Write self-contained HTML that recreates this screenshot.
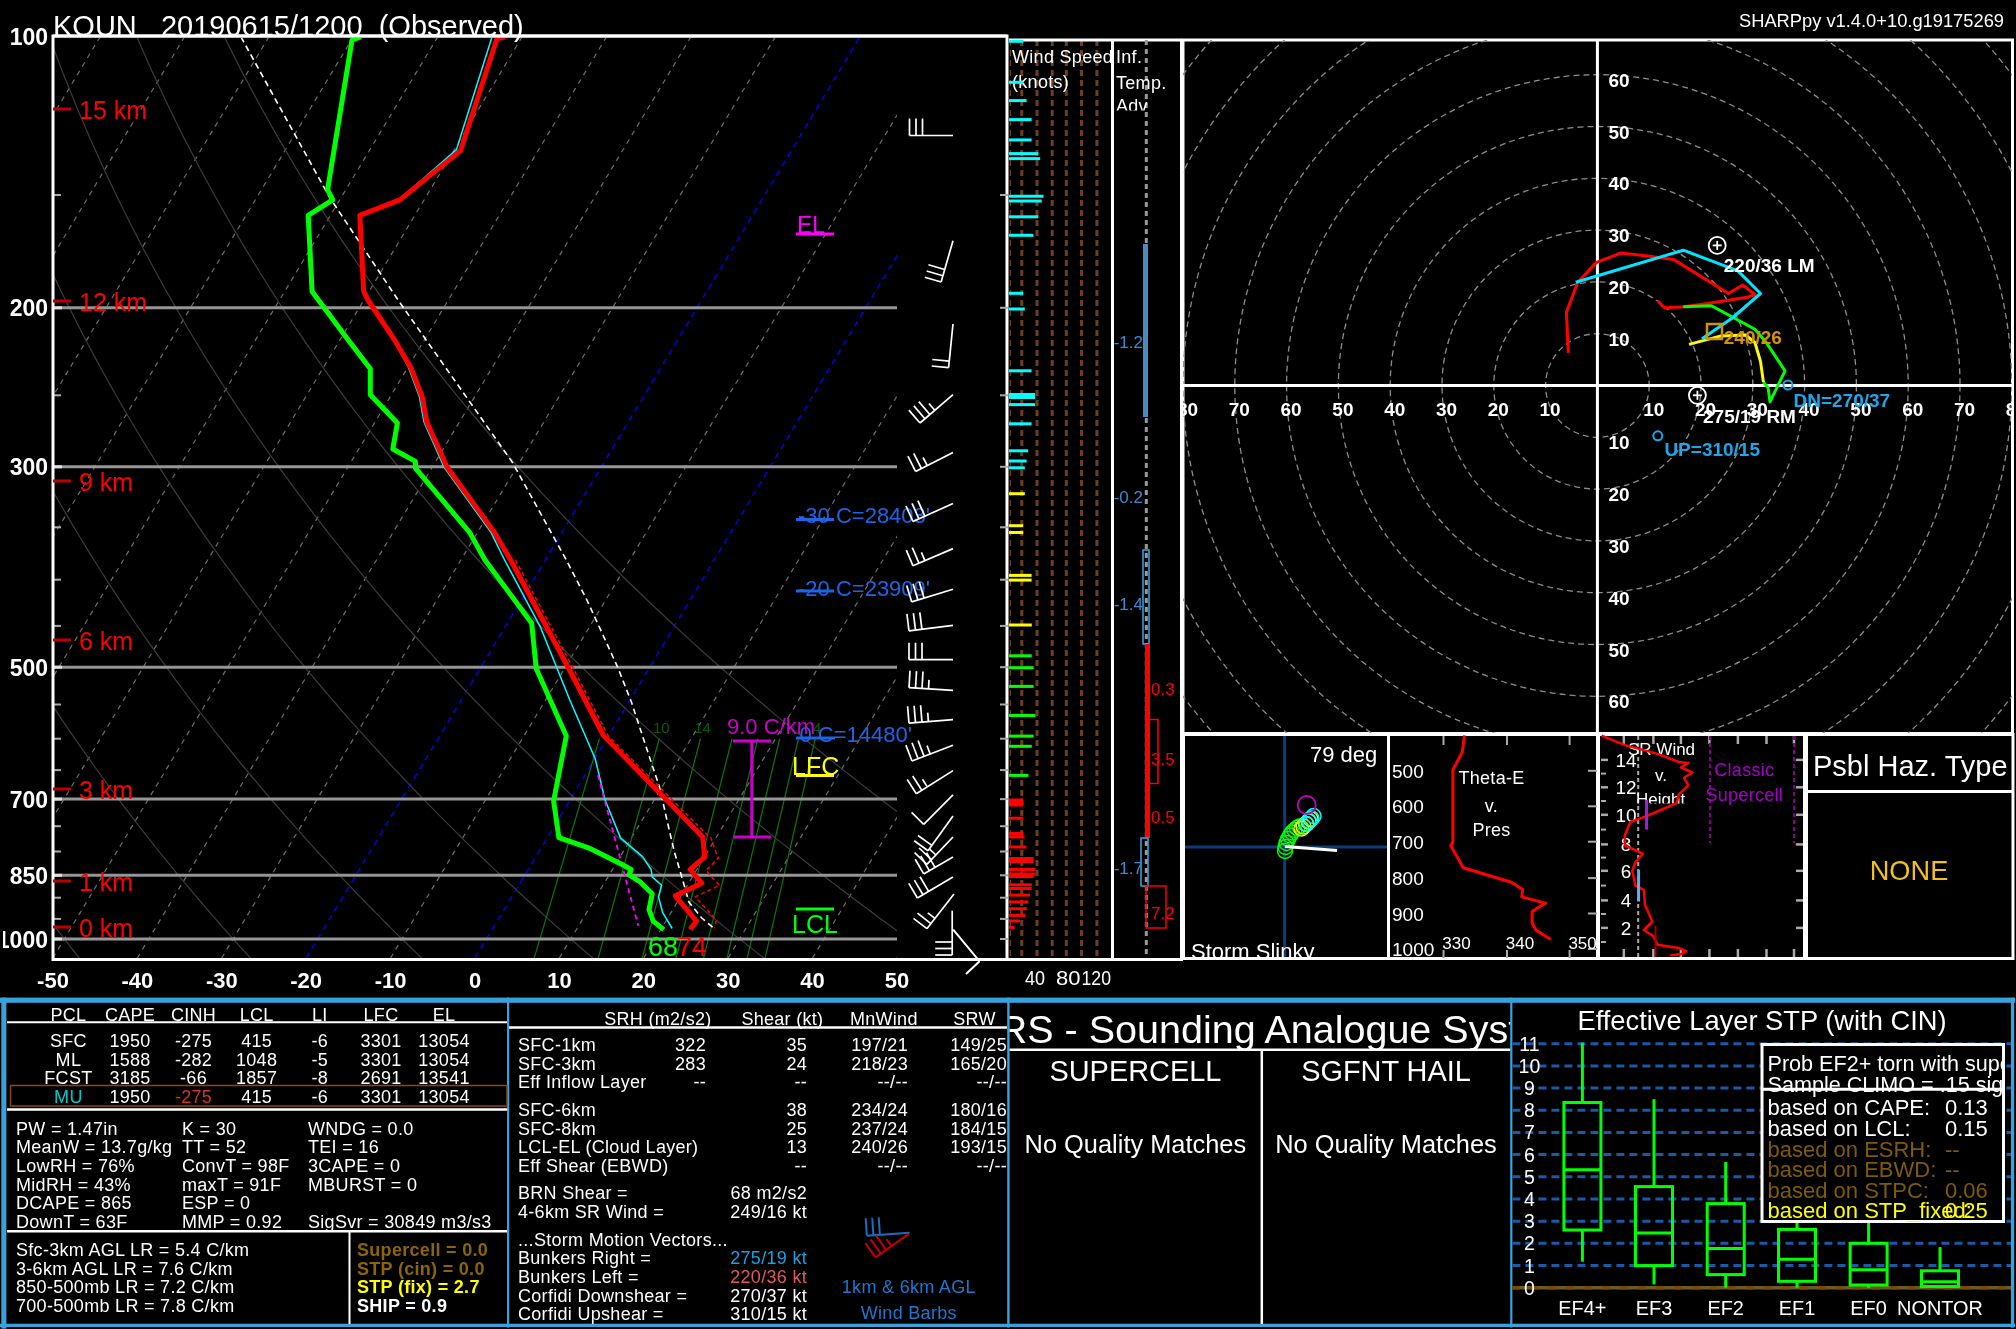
<!DOCTYPE html><html><head><meta charset="utf-8"><style>
html,body{margin:0;padding:0;background:#000;width:2016px;height:1329px;overflow:hidden}
svg{display:block;will-change:transform} text{font-family:"Liberation Sans", sans-serif}
</style></head><body><svg width="2016" height="1329" viewBox="0 0 2016 1329">
<rect width="2016" height="1329" fill="#000"/>
<defs><clipPath id="skc"><rect x="53" y="38" width="844" height="920"/></clipPath><clipPath id="lblc"><rect x="3" y="0" width="60" height="1000"/></clipPath><clipPath id="hodc"><rect x="1183" y="40" width="829" height="693"/></clipPath></defs>
<g clip-path="url(#skc)">
<line x1="-875.5" y1="958" x2="-321.4" y2="36" stroke="#6e6e6e" stroke-width="1.2" stroke-dasharray="5,5"/>
<line x1="-791.1" y1="958" x2="-237" y2="36" stroke="#6e6e6e" stroke-width="1.2" stroke-dasharray="5,5"/>
<line x1="-706.7" y1="958" x2="-152.6" y2="36" stroke="#6e6e6e" stroke-width="1.2" stroke-dasharray="5,5"/>
<line x1="-622.3" y1="958" x2="-68.2" y2="36" stroke="#6e6e6e" stroke-width="1.2" stroke-dasharray="5,5"/>
<line x1="-537.9" y1="958" x2="16.2" y2="36" stroke="#6e6e6e" stroke-width="1.2" stroke-dasharray="5,5"/>
<line x1="-453.5" y1="958" x2="100.6" y2="36" stroke="#6e6e6e" stroke-width="1.2" stroke-dasharray="5,5"/>
<line x1="-369.1" y1="958" x2="185" y2="36" stroke="#6e6e6e" stroke-width="1.2" stroke-dasharray="5,5"/>
<line x1="-284.7" y1="958" x2="269.4" y2="36" stroke="#6e6e6e" stroke-width="1.2" stroke-dasharray="5,5"/>
<line x1="-200.3" y1="958" x2="353.8" y2="36" stroke="#6e6e6e" stroke-width="1.2" stroke-dasharray="5,5"/>
<line x1="-115.9" y1="958" x2="438.2" y2="36" stroke="#6e6e6e" stroke-width="1.2" stroke-dasharray="5,5"/>
<line x1="-31.5" y1="958" x2="522.6" y2="36" stroke="#6e6e6e" stroke-width="1.2" stroke-dasharray="5,5"/>
<line x1="52.9" y1="958" x2="607" y2="36" stroke="#6e6e6e" stroke-width="1.2" stroke-dasharray="5,5"/>
<line x1="137.3" y1="958" x2="691.4" y2="36" stroke="#6e6e6e" stroke-width="1.2" stroke-dasharray="5,5"/>
<line x1="221.7" y1="958" x2="775.8" y2="36" stroke="#6e6e6e" stroke-width="1.2" stroke-dasharray="5,5"/>
<line x1="306.1" y1="958" x2="860.2" y2="36" stroke="#0000ff" stroke-width="1.3" stroke-dasharray="6,5"/>
<line x1="390.5" y1="958" x2="944.6" y2="36" stroke="#6e6e6e" stroke-width="1.2" stroke-dasharray="5,5"/>
<line x1="474.9" y1="958" x2="1029" y2="36" stroke="#0000ff" stroke-width="1.3" stroke-dasharray="6,5"/>
<line x1="559.3" y1="958" x2="1113.4" y2="36" stroke="#6e6e6e" stroke-width="1.2" stroke-dasharray="5,5"/>
<line x1="643.7" y1="958" x2="1197.8" y2="36" stroke="#6e6e6e" stroke-width="1.2" stroke-dasharray="5,5"/>
<line x1="728.1" y1="958" x2="1282.2" y2="36" stroke="#6e6e6e" stroke-width="1.2" stroke-dasharray="5,5"/>
<line x1="812.5" y1="958" x2="1366.6" y2="36" stroke="#6e6e6e" stroke-width="1.2" stroke-dasharray="5,5"/>
<line x1="896.9" y1="958" x2="1451" y2="36" stroke="#6e6e6e" stroke-width="1.2" stroke-dasharray="5,5"/>
<polyline points="79.4,958.1 76.4,954.4 73.4,950.6 70.4,946.8 67.4,942.9 64.4,939 61.4,935.1 58.3,931.1 55.3,927.1 52.2,923 49.1,918.9 46,914.7 42.9,910.5 39.7,906.3 36.6,902 33.4,897.7 30.2,893.3 27,888.9 23.8,884.4 20.5,879.9 17.3,875.3 14,870.6 10.7,865.9 7.4,861.2 4,856.4 0.7,851.5 -2.7,846.6 -6.1,841.6 -9.5,836.5 -12.9,831.4 -16.4,826.2 -19.9,820.9 -23.4,815.6 -26.9,810.2 -30.4,804.7 -34,799.1 -37.6,793.5 -41.2,787.8 -44.8,781.9 -48.5,776 -52.1,770.1 -55.9,764 -59.6,757.8 -63.3,751.5 -67.1,745.2 -70.9,738.7 -74.8,732.1 -78.6,725.4 -82.5,718.6 -86.4,711.6 -90.4,704.5 -94.4,697.4 -98.4,690 -102.4,682.6 -106.5,674.9 -110.6,667.2 -114.7,659.2 -118.9,651.2 -123.1,642.9 -127.3,634.5 -131.6,625.9 -135.9,617 -140.2,608 -144.6,598.8 -149,589.3 -153.4,579.7 -157.9,569.7 -162.4,559.5 -167,549.1 -171.6,538.3 -176.2,527.3 -180.9,515.9 -185.6,504.2 -190.3,492.2 -195.1,479.7 -200,466.8 -204.9,453.5 -209.8,439.8 -214.7,425.5 -219.7,410.7 -224.8,395.3 -229.9,379.3 -235,362.6 -240.1,345.2 -245.3,327 -250.5,307.8 -255.7,287.7 -260.9,266.5 -266.1,244.1 -271.3,220.3 -276.5,195 -281.6,168 -286.6,138.9 -291.5,107.5 -296.3,73.4 -300.7,36" fill="none" stroke="#3c3c3c" stroke-width="1.2" stroke-linejoin="round"/>
<polyline points="250.5,958.1 247.1,954.4 243.7,950.6 240.2,946.8 236.7,942.9 233.2,939 229.7,935.1 226.2,931.1 222.6,927.1 219,923 215.5,918.9 211.8,914.7 208.2,910.5 204.6,906.3 200.9,902 197.2,897.7 193.5,893.3 189.8,888.9 186,884.4 182.2,879.9 178.4,875.3 174.6,870.6 170.7,865.9 166.9,861.2 163,856.4 159.1,851.5 155.1,846.6 151.2,841.6 147.2,836.5 143.1,831.4 139.1,826.2 135,820.9 130.9,815.6 126.8,810.2 122.6,804.7 118.5,799.1 114.3,793.5 110,787.8 105.7,781.9 101.4,776 97.1,770.1 92.7,764 88.3,757.8 83.9,751.5 79.4,745.2 74.9,738.7 70.4,732.1 65.8,725.4 61.2,718.6 56.6,711.6 51.9,704.5 47.2,697.4 42.4,690 37.6,682.6 32.8,674.9 27.9,667.2 23,659.2 18,651.2 13,642.9 7.9,634.5 2.8,625.9 -2.3,617 -7.6,608 -12.8,598.8 -18.1,589.3 -23.5,579.7 -28.9,569.7 -34.4,559.5 -39.9,549.1 -45.5,538.3 -51.1,527.3 -56.8,515.9 -62.6,504.2 -68.4,492.2 -74.3,479.7 -80.3,466.8 -86.3,453.5 -92.4,439.8 -98.6,425.5 -104.9,410.7 -111.2,395.3 -117.6,379.3 -124,362.6 -130.6,345.2 -137.2,327 -143.9,307.8 -150.6,287.7 -157.5,266.5 -164.4,244.1 -171.3,220.3 -178.3,195 -185.4,168 -192.4,138.9 -199.4,107.5 -206.4,73.4 -213.3,36" fill="none" stroke="#3c3c3c" stroke-width="1.2" stroke-linejoin="round"/>
<polyline points="421.7,958.1 417.8,954.4 413.9,950.6 410,946.8 406,942.9 402,939 398,935.1 394,931.1 390,927.1 385.9,923 381.8,918.9 377.7,914.7 373.5,910.5 369.4,906.3 365.2,902 361,897.7 356.8,893.3 352.5,888.9 348.2,884.4 343.9,879.9 339.6,875.3 335.2,870.6 330.8,865.9 326.4,861.2 321.9,856.4 317.4,851.5 312.9,846.6 308.4,841.6 303.8,836.5 299.2,831.4 294.6,826.2 289.9,820.9 285.2,815.6 280.5,810.2 275.7,804.7 270.9,799.1 266.1,793.5 261.2,787.8 256.3,781.9 251.3,776 246.4,770.1 241.3,764 236.3,757.8 231.2,751.5 226,745.2 220.8,738.7 215.6,732.1 210.3,725.4 205,718.6 199.6,711.6 194.2,704.5 188.7,697.4 183.2,690 177.7,682.6 172,674.9 166.4,667.2 160.6,659.2 154.9,651.2 149,642.9 143.1,634.5 137.2,625.9 131.2,617 125.1,608 118.9,598.8 112.7,589.3 106.4,579.7 100.1,569.7 93.7,559.5 87.2,549.1 80.6,538.3 73.9,527.3 67.2,515.9 60.4,504.2 53.5,492.2 46.5,479.7 39.4,466.8 32.2,453.5 24.9,439.8 17.5,425.5 10,410.7 2.4,395.3 -5.3,379.3 -13.1,362.6 -21.1,345.2 -29.1,327 -37.3,307.8 -45.6,287.7 -54.1,266.5 -62.6,244.1 -71.3,220.3 -80.1,195 -89.1,168 -98.2,138.9 -107.3,107.5 -116.6,73.4 -125.9,36" fill="none" stroke="#3c3c3c" stroke-width="1.2" stroke-linejoin="round"/>
<polyline points="592.9,958.1 588.5,954.4 584.1,950.6 579.7,946.8 575.3,942.9 570.8,939 566.3,935.1 561.8,931.1 557.3,927.1 552.7,923 548.1,918.9 543.5,914.7 538.9,910.5 534.2,906.3 529.5,902 524.8,897.7 520,893.3 515.2,888.9 510.4,884.4 505.6,879.9 500.7,875.3 495.8,870.6 490.8,865.9 485.9,861.2 480.9,856.4 475.8,851.5 470.7,846.6 465.6,841.6 460.5,836.5 455.3,831.4 450.1,826.2 444.8,820.9 439.5,815.6 434.2,810.2 428.8,804.7 423.4,799.1 417.9,793.5 412.4,787.8 406.8,781.9 401.2,776 395.6,770.1 389.9,764 384.2,757.8 378.4,751.5 372.6,745.2 366.7,738.7 360.8,732.1 354.8,725.4 348.7,718.6 342.7,711.6 336.5,704.5 330.3,697.4 324,690 317.7,682.6 311.3,674.9 304.8,667.2 298.3,659.2 291.7,651.2 285.1,642.9 278.4,634.5 271.5,625.9 264.7,617 257.7,608 250.7,598.8 243.6,589.3 236.4,579.7 229.1,569.7 221.7,559.5 214.2,549.1 206.6,538.3 199,527.3 191.2,515.9 183.3,504.2 175.3,492.2 167.2,479.7 159,466.8 150.7,453.5 142.2,439.8 133.6,425.5 124.9,410.7 116,395.3 107,379.3 97.8,362.6 88.5,345.2 79,327 69.3,307.8 59.4,287.7 49.4,266.5 39.1,244.1 28.7,220.3 18,195 7.2,168 -3.9,138.9 -15.2,107.5 -26.7,73.4 -38.4,36" fill="none" stroke="#3c3c3c" stroke-width="1.2" stroke-linejoin="round"/>
<polyline points="764,958.1 759.2,954.4 754.4,950.6 749.5,946.8 744.6,942.9 739.6,939 734.7,935.1 729.7,931.1 724.6,927.1 719.6,923 714.5,918.9 709.4,914.7 704.2,910.5 699,906.3 693.8,902 688.6,897.7 683.3,893.3 678,888.9 672.6,884.4 667.3,879.9 661.8,875.3 656.4,870.6 650.9,865.9 645.4,861.2 639.8,856.4 634.2,851.5 628.5,846.6 622.9,841.6 617.1,836.5 611.4,831.4 605.5,826.2 599.7,820.9 593.8,815.6 587.8,810.2 581.8,804.7 575.8,799.1 569.7,793.5 563.6,787.8 557.4,781.9 551.2,776 544.9,770.1 538.5,764 532.1,757.8 525.7,751.5 519.1,745.2 512.6,738.7 505.9,732.1 499.3,725.4 492.5,718.6 485.7,711.6 478.8,704.5 471.8,697.4 464.8,690 457.7,682.6 450.6,674.9 443.3,667.2 436,659.2 428.6,651.2 421.1,642.9 413.6,634.5 405.9,625.9 398.2,617 390.3,608 382.4,598.8 374.4,589.3 366.3,579.7 358.1,569.7 349.7,559.5 341.3,549.1 332.7,538.3 324,527.3 315.2,515.9 306.3,504.2 297.2,492.2 288,479.7 278.7,466.8 269.2,453.5 259.6,439.8 249.7,425.5 239.8,410.7 229.6,395.3 219.3,379.3 208.7,362.6 198,345.2 187,327 175.9,307.8 164.4,287.7 152.8,266.5 140.9,244.1 128.7,220.3 116.2,195 103.4,168 90.3,138.9 76.9,107.5 63.1,73.4 49,36" fill="none" stroke="#3c3c3c" stroke-width="1.2" stroke-linejoin="round"/>
<polyline points="935.2,958.1 929.9,954.4 924.6,950.6 919.2,946.8 913.8,942.9 908.4,939 903,935.1 897.5,931.1 892,927.1 886.4,923 880.8,918.9 875.2,914.7 869.6,910.5 863.9,906.3 858.1,902 852.4,897.7 846.6,893.3 840.7,888.9 834.9,884.4 828.9,879.9 823,875.3 817,870.6 810.9,865.9 804.9,861.2 798.7,856.4 792.6,851.5 786.3,846.6 780.1,841.6 773.8,836.5 767.4,831.4 761,826.2 754.6,820.9 748.1,815.6 741.5,810.2 734.9,804.7 728.3,799.1 721.5,793.5 714.8,787.8 707.9,781.9 701.1,776 694.1,770.1 687.1,764 680,757.8 672.9,751.5 665.7,745.2 658.5,738.7 651.1,732.1 643.7,725.4 636.3,718.6 628.7,711.6 621.1,704.5 613.4,697.4 605.6,690 597.8,682.6 589.8,674.9 581.8,667.2 573.7,659.2 565.5,651.2 557.2,642.9 548.8,634.5 540.3,625.9 531.7,617 523,608 514.2,598.8 505.2,589.3 496.2,579.7 487,569.7 477.8,559.5 468.3,549.1 458.8,538.3 449.1,527.3 439.3,515.9 429.3,504.2 419.1,492.2 408.8,479.7 398.4,466.8 387.7,453.5 376.9,439.8 365.9,425.5 354.6,410.7 343.2,395.3 331.5,379.3 319.6,362.6 307.5,345.2 295.1,327 282.4,307.8 269.5,287.7 256.2,266.5 242.6,244.1 228.7,220.3 214.4,195 199.7,168 184.5,138.9 169,107.5 153,73.4 136.4,36" fill="none" stroke="#3c3c3c" stroke-width="1.2" stroke-linejoin="round"/>
<polyline points="1106.4,958.1 1100.6,954.4 1094.8,950.6 1089,946.8 1083.1,942.9 1077.2,939 1071.3,935.1 1065.3,931.1 1059.3,927.1 1053.3,923 1047.2,918.9 1041.1,914.7 1034.9,910.5 1028.7,906.3 1022.5,902 1016.2,897.7 1009.8,893.3 1003.5,888.9 997.1,884.4 990.6,879.9 984.1,875.3 977.6,870.6 971,865.9 964.4,861.2 957.7,856.4 950.9,851.5 944.2,846.6 937.3,841.6 930.4,836.5 923.5,831.4 916.5,826.2 909.5,820.9 902.4,815.6 895.2,810.2 888,804.7 880.7,799.1 873.4,793.5 866,787.8 858.5,781.9 851,776 843.4,770.1 835.7,764 828,757.8 820.2,751.5 812.3,745.2 804.3,738.7 796.3,732.1 788.2,725.4 780,718.6 771.7,711.6 763.4,704.5 754.9,697.4 746.4,690 737.8,682.6 729.1,674.9 720.3,667.2 711.4,659.2 702.3,651.2 693.2,642.9 684,634.5 674.7,625.9 665.2,617 655.6,608 645.9,598.8 636.1,589.3 626.1,579.7 616,569.7 605.8,559.5 595.4,549.1 584.9,538.3 574.2,527.3 563.3,515.9 552.3,504.2 541,492.2 529.6,479.7 518,466.8 506.2,453.5 494.2,439.8 482,425.5 469.5,410.7 456.8,395.3 443.8,379.3 430.6,362.6 417,345.2 403.2,327 389,307.8 374.5,287.7 359.6,266.5 344.4,244.1 328.7,220.3 312.5,195 295.9,168 278.8,138.9 261.1,107.5 242.8,73.4 223.9,36" fill="none" stroke="#3c3c3c" stroke-width="1.2" stroke-linejoin="round"/>
<line x1="534.2" y1="958.1" x2="599.4" y2="738.7" stroke="#0a7a0a" stroke-width="1.2"/>
<line x1="598.2" y1="958.1" x2="659.3" y2="738.7" stroke="#0a7a0a" stroke-width="1.2"/>
<line x1="642.2" y1="958.1" x2="700.5" y2="738.7" stroke="#0a7a0a" stroke-width="1.2"/>
<line x1="676.1" y1="958.1" x2="732.1" y2="738.7" stroke="#0a7a0a" stroke-width="1.2"/>
<line x1="703.6" y1="958.1" x2="757.9" y2="738.7" stroke="#0a7a0a" stroke-width="1.2"/>
<line x1="727" y1="958.1" x2="779.7" y2="738.7" stroke="#0a7a0a" stroke-width="1.2"/>
<line x1="747.2" y1="958.1" x2="798.5" y2="738.7" stroke="#0a7a0a" stroke-width="1.2"/>
<line x1="765.1" y1="958.1" x2="815.2" y2="738.7" stroke="#0a7a0a" stroke-width="1.2"/>
</g>
<line x1="53" y1="307.8" x2="897" y2="307.8" stroke="#969696" stroke-width="3"/>
<line x1="53" y1="307.8" x2="62" y2="307.8" stroke="#e0e0e0" stroke-width="3"/>
<line x1="53" y1="466.8" x2="897" y2="466.8" stroke="#969696" stroke-width="3"/>
<line x1="53" y1="466.8" x2="62" y2="466.8" stroke="#e0e0e0" stroke-width="3"/>
<line x1="53" y1="667.2" x2="897" y2="667.2" stroke="#969696" stroke-width="3"/>
<line x1="53" y1="667.2" x2="62" y2="667.2" stroke="#e0e0e0" stroke-width="3"/>
<line x1="53" y1="799.1" x2="897" y2="799.1" stroke="#969696" stroke-width="3"/>
<line x1="53" y1="799.1" x2="62" y2="799.1" stroke="#e0e0e0" stroke-width="3"/>
<line x1="53" y1="875.3" x2="897" y2="875.3" stroke="#969696" stroke-width="3"/>
<line x1="53" y1="875.3" x2="62" y2="875.3" stroke="#e0e0e0" stroke-width="3"/>
<line x1="53" y1="939" x2="897" y2="939" stroke="#969696" stroke-width="3"/>
<line x1="53" y1="939" x2="62" y2="939" stroke="#e0e0e0" stroke-width="3"/>
<line x1="53" y1="195" x2="61" y2="195" stroke="#aaaaaa" stroke-width="2"/>
<line x1="53" y1="395.3" x2="61" y2="395.3" stroke="#aaaaaa" stroke-width="2"/>
<line x1="53" y1="527.3" x2="61" y2="527.3" stroke="#aaaaaa" stroke-width="2"/>
<line x1="53" y1="579.7" x2="61" y2="579.7" stroke="#aaaaaa" stroke-width="2"/>
<line x1="53" y1="625.9" x2="61" y2="625.9" stroke="#aaaaaa" stroke-width="2"/>
<line x1="53" y1="704.5" x2="61" y2="704.5" stroke="#aaaaaa" stroke-width="2"/>
<line x1="53" y1="738.7" x2="61" y2="738.7" stroke="#aaaaaa" stroke-width="2"/>
<line x1="53" y1="770.1" x2="61" y2="770.1" stroke="#aaaaaa" stroke-width="2"/>
<line x1="53" y1="826.2" x2="61" y2="826.2" stroke="#aaaaaa" stroke-width="2"/>
<line x1="53" y1="851.5" x2="61" y2="851.5" stroke="#aaaaaa" stroke-width="2"/>
<line x1="53" y1="897.7" x2="61" y2="897.7" stroke="#aaaaaa" stroke-width="2"/>
<line x1="53" y1="918.9" x2="61" y2="918.9" stroke="#aaaaaa" stroke-width="2"/>
<rect x="53" y="36" width="954" height="923.5" fill="none" stroke="#fff" stroke-width="3"/>
<g clip-path="url(#lblc)">
<text x="48" y="44.5" font-size="23" fill="#fff" text-anchor="end" font-weight="bold">100</text>
<text x="48" y="316.3" font-size="23" fill="#fff" text-anchor="end" font-weight="bold">200</text>
<text x="48" y="475.3" font-size="23" fill="#fff" text-anchor="end" font-weight="bold">300</text>
<text x="48" y="675.7" font-size="23" fill="#fff" text-anchor="end" font-weight="bold">500</text>
<text x="48" y="807.6" font-size="23" fill="#fff" text-anchor="end" font-weight="bold">700</text>
<text x="48" y="883.8" font-size="23" fill="#fff" text-anchor="end" font-weight="bold">850</text>
<text x="48" y="947.5" font-size="23" fill="#fff" text-anchor="end" font-weight="bold">1000</text>
</g>
<text x="53" y="988" font-size="22" fill="#fff" text-anchor="middle" font-weight="bold">-50</text>
<text x="137.4" y="988" font-size="22" fill="#fff" text-anchor="middle" font-weight="bold">-40</text>
<text x="221.8" y="988" font-size="22" fill="#fff" text-anchor="middle" font-weight="bold">-30</text>
<text x="306.2" y="988" font-size="22" fill="#fff" text-anchor="middle" font-weight="bold">-20</text>
<text x="390.6" y="988" font-size="22" fill="#fff" text-anchor="middle" font-weight="bold">-10</text>
<text x="475" y="988" font-size="22" fill="#fff" text-anchor="middle" font-weight="bold">0</text>
<text x="559.4" y="988" font-size="22" fill="#fff" text-anchor="middle" font-weight="bold">10</text>
<text x="643.8" y="988" font-size="22" fill="#fff" text-anchor="middle" font-weight="bold">20</text>
<text x="728.2" y="988" font-size="22" fill="#fff" text-anchor="middle" font-weight="bold">30</text>
<text x="812.6" y="988" font-size="22" fill="#fff" text-anchor="middle" font-weight="bold">40</text>
<text x="897" y="988" font-size="22" fill="#fff" text-anchor="middle" font-weight="bold">50</text>
<line x1="53" y1="927" x2="71" y2="927" stroke="#bb0000" stroke-width="3"/>
<text x="79" y="937" font-size="25" fill="#ff0000">0 km</text>
<line x1="53" y1="881" x2="71" y2="881" stroke="#bb0000" stroke-width="3"/>
<text x="79" y="891" font-size="25" fill="#ff0000">1 km</text>
<line x1="53" y1="789" x2="71" y2="789" stroke="#bb0000" stroke-width="3"/>
<text x="79" y="799" font-size="25" fill="#ff0000">3 km</text>
<line x1="53" y1="640" x2="71" y2="640" stroke="#bb0000" stroke-width="3"/>
<text x="79" y="650" font-size="25" fill="#ff0000">6 km</text>
<line x1="53" y1="481" x2="71" y2="481" stroke="#bb0000" stroke-width="3"/>
<text x="79" y="491" font-size="25" fill="#ff0000">9 km</text>
<line x1="53" y1="301" x2="71" y2="301" stroke="#bb0000" stroke-width="3"/>
<text x="79" y="311" font-size="25" fill="#ff0000">12 km</text>
<line x1="53" y1="109" x2="71" y2="109" stroke="#bb0000" stroke-width="3"/>
<text x="79" y="119" font-size="25" fill="#ff0000">15 km</text>
<text x="53" y="35.5" font-size="29" fill="#fff" xml:space="preserve" style="white-space:pre">KOUN   20190615/1200  (Observed)</text>
<text x="2004" y="27" font-size="19" fill="#fff" text-anchor="end" textLength="265" lengthAdjust="spacingAndGlyphs">SHARPpy v1.4.0+10.g19175269</text>
<line x1="53" y1="36" x2="1007" y2="36" stroke="#fff" stroke-width="3"/>
<text x="601.4" y="733" font-size="15" fill="#0a5c0a" text-anchor="middle">6</text>
<text x="661.3" y="733" font-size="15" fill="#0a5c0a" text-anchor="middle">10</text>
<text x="702.5" y="733" font-size="15" fill="#0a5c0a" text-anchor="middle">14</text>
<text x="817.2" y="733" font-size="15" fill="#0a5c0a" text-anchor="middle">4</text>
<g clip-path="url(#skc)">
<polyline points="492,37 456.5,149.6 399,199.9 359.5,215.4 363.4,291.5 393.5,340 408.6,367.7 419.5,397 424,421.9 444,467 491,532.4 504.6,560 540.7,627.7 569.8,700 595.2,758.7 605,799.8 613.2,820 620.5,837.9 642.7,856.9 651.1,869.5 652.2,876.9 661.6,885.3 658.5,896.9 662.7,912.7 672.2,928.5" fill="none" stroke="#00ffff" stroke-width="1.5" stroke-linejoin="round"/>
<polyline points="241,37 330,198 399.6,302.3 512.5,462.5 566.3,560 586.9,600 617.5,666.8 631.4,702 649,755.6 659.8,788 666.9,820 674.3,851.6 682.7,880 689,902.2 701.7,918 714.3,928.5" fill="none" stroke="#ffffff" stroke-width="1.6" stroke-linejoin="round" stroke-dasharray="6,4"/>
<polyline points="515.5,560 572.5,666.8 608,735.5 707.5,835 710.1,835.8 716.4,853.7 718.5,857.9 705.9,870.6 719.6,885.3 695.3,896.9 716.4,920.1 714.3,928.5" fill="none" stroke="#ff0000" stroke-width="1.5" stroke-linejoin="round" stroke-dasharray="4,3"/>
<polyline points="598,775.3 638.3,926" fill="none" stroke="#ff00ff" stroke-width="1.8" stroke-linejoin="round" stroke-dasharray="5,4"/>
<polyline points="361,37 352,40 327.6,189.6 332.7,199.9 308.2,215.4 312.1,291.5 318.4,300 348.2,340 370.3,368.8 370.3,394.8 397.4,423 392.8,449 415.4,461.4 415.4,468.1 469.6,532.4 485,560 531.7,623.2 536.2,668.4 566.3,736 553.6,800.9 558.9,837.7 590,848.4 621.6,864.2 631.1,869.5 629,874.8 640.6,882.2 652.2,893.7 649,909.5 653.2,921.1 663.7,929.6" fill="none" stroke="#00ff00" stroke-width="5" stroke-linejoin="round"/>
<polyline points="505,37 497,38.5 460.4,150.9 399.8,199.9 359.8,215.4 363.7,291.5 368,300 394.6,340 410.9,367.7 422.2,397 426.7,421.9 447,467 494.4,532.4 510.6,560 567.8,666.8 603.5,735.5 702.7,836.9 704.8,856.9 690.1,869.5 701.7,883.2 675.3,895.8 696.4,921.1 690.1,929.6" fill="none" stroke="#ff0000" stroke-width="5" stroke-linejoin="round"/>
</g>
<text x="797" y="233" font-size="23" fill="#ff00ff">EL</text>
<line x1="796" y1="234" x2="834" y2="234" stroke="#ff00ff" stroke-width="3"/>
<text x="798" y="522.5" font-size="22" fill="#1e64e6">-30 C=28403'</text>
<line x1="796" y1="519.5" x2="834" y2="519.5" stroke="#1e64e6" stroke-width="3"/>
<text x="798" y="595.5" font-size="22" fill="#1e64e6">-20 C=23909'</text>
<line x1="796" y1="591" x2="834" y2="591" stroke="#1e64e6" stroke-width="3"/>
<text x="799.5" y="742" font-size="22" fill="#1e64e6">0 C=14480'</text>
<line x1="796" y1="738" x2="835" y2="738" stroke="#1e64e6" stroke-width="3"/>
<text x="727" y="734" font-size="22" fill="#cc00cc">9.0 C/km</text>
<line x1="751.8" y1="741" x2="751.8" y2="837" stroke="#cc00cc" stroke-width="3"/>
<line x1="733" y1="741" x2="771" y2="741" stroke="#cc00cc" stroke-width="3"/>
<line x1="733" y1="837" x2="771" y2="837" stroke="#cc00cc" stroke-width="3"/>
<text x="792" y="775" font-size="25" fill="#ffff00">LFC</text>
<line x1="796" y1="775.5" x2="834" y2="775.5" stroke="#ffff00" stroke-width="3"/>
<text x="792" y="933" font-size="25" fill="#00ff00">LCL</text>
<line x1="796" y1="909" x2="834" y2="909" stroke="#00ff00" stroke-width="3"/>
<text x="648" y="956" font-size="27" fill="#00ff00">68</text>
<text x="677" y="956" font-size="27" fill="#ff0000">74</text>
<line x1="953" y1="135.5" x2="909.5" y2="135.5" stroke="#fff" stroke-width="1.7"/>
<line x1="909.5" y1="135.5" x2="909.5" y2="118.5" stroke="#fff" stroke-width="1.7"/>
<line x1="916" y1="135.5" x2="916" y2="118.5" stroke="#fff" stroke-width="1.7"/>
<line x1="922.5" y1="135.5" x2="922.5" y2="118.5" stroke="#fff" stroke-width="1.7"/>
<line x1="953" y1="240.7" x2="941.1" y2="282" stroke="#fff" stroke-width="1.7"/>
<line x1="941.1" y1="282" x2="924.8" y2="277.3" stroke="#fff" stroke-width="1.7"/>
<line x1="942.9" y1="275.8" x2="926.6" y2="271" stroke="#fff" stroke-width="1.7"/>
<line x1="944.7" y1="269.5" x2="928.4" y2="264.8" stroke="#fff" stroke-width="1.7"/>
<line x1="953" y1="324" x2="948.6" y2="367.7" stroke="#fff" stroke-width="1.7"/>
<line x1="948.6" y1="367.7" x2="931.7" y2="366" stroke="#fff" stroke-width="1.7"/>
<line x1="949.3" y1="361.2" x2="932.3" y2="359.5" stroke="#fff" stroke-width="1.7"/>
<line x1="953" y1="394.7" x2="920" y2="423" stroke="#fff" stroke-width="1.7"/>
<line x1="920" y1="423" x2="908.9" y2="410.1" stroke="#fff" stroke-width="1.7"/>
<line x1="924.9" y1="418.8" x2="913.9" y2="405.9" stroke="#fff" stroke-width="1.7"/>
<line x1="929.9" y1="414.5" x2="918.8" y2="401.6" stroke="#fff" stroke-width="1.7"/>
<line x1="934.8" y1="410.3" x2="928.9" y2="403.5" stroke="#fff" stroke-width="1.7"/>
<line x1="953" y1="452.5" x2="915.6" y2="471.4" stroke="#fff" stroke-width="1.7"/>
<line x1="915.6" y1="471.4" x2="907.9" y2="456.2" stroke="#fff" stroke-width="1.7"/>
<line x1="921.4" y1="468.5" x2="913.7" y2="453.3" stroke="#fff" stroke-width="1.7"/>
<line x1="927.2" y1="465.5" x2="923.1" y2="457.5" stroke="#fff" stroke-width="1.7"/>
<line x1="953" y1="503.5" x2="913" y2="521.5" stroke="#fff" stroke-width="1.7"/>
<line x1="913" y1="521.5" x2="906" y2="506" stroke="#fff" stroke-width="1.7"/>
<line x1="918.9" y1="518.8" x2="912" y2="503.3" stroke="#fff" stroke-width="1.7"/>
<line x1="924.9" y1="516.2" x2="917.9" y2="500.7" stroke="#fff" stroke-width="1.7"/>
<line x1="953" y1="548.6" x2="913" y2="565.8" stroke="#fff" stroke-width="1.7"/>
<line x1="913" y1="565.8" x2="906.3" y2="550.2" stroke="#fff" stroke-width="1.7"/>
<line x1="919" y1="563.2" x2="912.3" y2="547.6" stroke="#fff" stroke-width="1.7"/>
<line x1="924.9" y1="560.7" x2="921.4" y2="552.4" stroke="#fff" stroke-width="1.7"/>
<line x1="953" y1="589.3" x2="911.7" y2="601.9" stroke="#fff" stroke-width="1.7"/>
<line x1="911.7" y1="601.9" x2="906.7" y2="585.6" stroke="#fff" stroke-width="1.7"/>
<line x1="917.9" y1="600" x2="913" y2="583.7" stroke="#fff" stroke-width="1.7"/>
<line x1="924.1" y1="598.1" x2="919.2" y2="581.8" stroke="#fff" stroke-width="1.7"/>
<line x1="953" y1="625.4" x2="909" y2="630.8" stroke="#fff" stroke-width="1.7"/>
<line x1="909" y1="630.8" x2="906.9" y2="613.9" stroke="#fff" stroke-width="1.7"/>
<line x1="915.5" y1="630" x2="913.4" y2="613.1" stroke="#fff" stroke-width="1.7"/>
<line x1="921.9" y1="629.2" x2="919.8" y2="612.3" stroke="#fff" stroke-width="1.7"/>
<line x1="953" y1="659.7" x2="909" y2="659.7" stroke="#fff" stroke-width="1.7"/>
<line x1="909" y1="659.7" x2="909" y2="642.7" stroke="#fff" stroke-width="1.7"/>
<line x1="915.5" y1="659.7" x2="915.5" y2="642.7" stroke="#fff" stroke-width="1.7"/>
<line x1="922" y1="659.7" x2="922" y2="642.7" stroke="#fff" stroke-width="1.7"/>
<line x1="953" y1="690.4" x2="909" y2="687.7" stroke="#fff" stroke-width="1.7"/>
<line x1="909" y1="687.7" x2="910" y2="670.7" stroke="#fff" stroke-width="1.7"/>
<line x1="915.5" y1="688.1" x2="916.5" y2="671.1" stroke="#fff" stroke-width="1.7"/>
<line x1="922" y1="688.5" x2="923" y2="671.5" stroke="#fff" stroke-width="1.7"/>
<line x1="928.5" y1="688.9" x2="929" y2="679.9" stroke="#fff" stroke-width="1.7"/>
<line x1="953" y1="719.6" x2="909" y2="723.2" stroke="#fff" stroke-width="1.7"/>
<line x1="909" y1="723.2" x2="907.6" y2="706.3" stroke="#fff" stroke-width="1.7"/>
<line x1="915.5" y1="722.7" x2="914.1" y2="705.7" stroke="#fff" stroke-width="1.7"/>
<line x1="922" y1="722.1" x2="920.6" y2="705.2" stroke="#fff" stroke-width="1.7"/>
<line x1="928.4" y1="721.6" x2="927.7" y2="712.6" stroke="#fff" stroke-width="1.7"/>
<line x1="953" y1="745.3" x2="912" y2="761" stroke="#fff" stroke-width="1.7"/>
<line x1="912" y1="761" x2="905.9" y2="745.1" stroke="#fff" stroke-width="1.7"/>
<line x1="918.1" y1="758.7" x2="912" y2="742.8" stroke="#fff" stroke-width="1.7"/>
<line x1="924.1" y1="756.4" x2="918.1" y2="740.5" stroke="#fff" stroke-width="1.7"/>
<line x1="930.2" y1="754" x2="927" y2="745.6" stroke="#fff" stroke-width="1.7"/>
<line x1="953" y1="770.6" x2="916.3" y2="793.8" stroke="#fff" stroke-width="1.7"/>
<line x1="916.3" y1="793.8" x2="907.2" y2="779.4" stroke="#fff" stroke-width="1.7"/>
<line x1="921.8" y1="790.3" x2="912.7" y2="776" stroke="#fff" stroke-width="1.7"/>
<line x1="927.3" y1="786.9" x2="922.5" y2="779.2" stroke="#fff" stroke-width="1.7"/>
<line x1="953" y1="794.8" x2="923.7" y2="824.3" stroke="#fff" stroke-width="1.7"/>
<line x1="923.7" y1="824.3" x2="911.6" y2="812.3" stroke="#fff" stroke-width="1.7"/>
<line x1="953" y1="815.9" x2="928" y2="850.7" stroke="#fff" stroke-width="1.7"/>
<line x1="928" y1="850.7" x2="914.2" y2="840.8" stroke="#fff" stroke-width="1.7"/>
<line x1="931.8" y1="845.4" x2="918" y2="835.5" stroke="#fff" stroke-width="1.7"/>
<line x1="953" y1="837" x2="926.9" y2="864.4" stroke="#fff" stroke-width="1.7"/>
<line x1="926.9" y1="864.4" x2="914.6" y2="852.7" stroke="#fff" stroke-width="1.7"/>
<line x1="931.4" y1="859.7" x2="919.1" y2="848" stroke="#fff" stroke-width="1.7"/>
<line x1="935.9" y1="855" x2="929.3" y2="848.8" stroke="#fff" stroke-width="1.7"/>
<line x1="953" y1="857" x2="923.7" y2="873.9" stroke="#fff" stroke-width="1.7"/>
<line x1="923.7" y1="873.9" x2="915.2" y2="859.2" stroke="#fff" stroke-width="1.7"/>
<line x1="929.3" y1="870.7" x2="920.8" y2="855.9" stroke="#fff" stroke-width="1.7"/>
<line x1="935" y1="867.4" x2="926.5" y2="852.7" stroke="#fff" stroke-width="1.7"/>
<line x1="953" y1="877" x2="917.4" y2="898" stroke="#fff" stroke-width="1.7"/>
<line x1="917.4" y1="898" x2="908.8" y2="883.4" stroke="#fff" stroke-width="1.7"/>
<line x1="923" y1="894.7" x2="914.4" y2="880.1" stroke="#fff" stroke-width="1.7"/>
<line x1="928.6" y1="891.4" x2="920" y2="876.8" stroke="#fff" stroke-width="1.7"/>
<line x1="954" y1="893.9" x2="926.9" y2="928.7" stroke="#fff" stroke-width="1.7"/>
<line x1="926.9" y1="928.7" x2="913.5" y2="918.3" stroke="#fff" stroke-width="1.7"/>
<line x1="930.9" y1="923.6" x2="917.5" y2="913.1" stroke="#fff" stroke-width="1.7"/>
<line x1="934.9" y1="918.4" x2="927.8" y2="912.9" stroke="#fff" stroke-width="1.7"/>
<line x1="952.2" y1="910.7" x2="952.2" y2="955" stroke="#fff" stroke-width="1.7"/>
<line x1="952.2" y1="955" x2="935.2" y2="955" stroke="#fff" stroke-width="1.7"/>
<line x1="952.2" y1="948.5" x2="935.2" y2="948.5" stroke="#fff" stroke-width="1.7"/>
<line x1="952.2" y1="942" x2="935.2" y2="942" stroke="#fff" stroke-width="1.7"/>
<line x1="953.2" y1="929.7" x2="979.6" y2="961.3" stroke="#fff" stroke-width="2"/>
<line x1="979.6" y1="961.3" x2="966" y2="974" stroke="#fff" stroke-width="2"/>
<line x1="979.6" y1="961.3" x2="979.6" y2="946" stroke="#fff" stroke-width="0"/>
<line x1="1010.3" y1="40" x2="1010.3" y2="958" stroke="#8a5030" stroke-width="1" stroke-dasharray="6,4"/>
<line x1="1021.8" y1="40" x2="1021.8" y2="958" stroke="#6e3e20" stroke-width="3" stroke-dasharray="6,4"/>
<line x1="1037" y1="40" x2="1037" y2="958" stroke="#6e3e20" stroke-width="3" stroke-dasharray="6,4"/>
<line x1="1052.2" y1="40" x2="1052.2" y2="958" stroke="#6e3e20" stroke-width="3" stroke-dasharray="6,4"/>
<line x1="1066.3" y1="40" x2="1066.3" y2="958" stroke="#6e3e20" stroke-width="3" stroke-dasharray="6,4"/>
<line x1="1081.5" y1="40" x2="1081.5" y2="958" stroke="#6e3e20" stroke-width="3" stroke-dasharray="6,4"/>
<line x1="1096.9" y1="40" x2="1096.9" y2="958" stroke="#6e3e20" stroke-width="3" stroke-dasharray="6,4"/>
<line x1="1009" y1="40" x2="1112" y2="40" stroke="#fff" stroke-width="3"/>
<line x1="1112.5" y1="40" x2="1112.5" y2="958" stroke="#fff" stroke-width="3"/>
<line x1="1006" y1="959.5" x2="1183" y2="959.5" stroke="#fff" stroke-width="3"/>
<line x1="1000" y1="195" x2="1008" y2="195" stroke="#aaaaaa" stroke-width="2"/>
<line x1="1000" y1="307.8" x2="1008" y2="307.8" stroke="#aaaaaa" stroke-width="2"/>
<line x1="1000" y1="395.3" x2="1008" y2="395.3" stroke="#aaaaaa" stroke-width="2"/>
<line x1="1000" y1="466.8" x2="1008" y2="466.8" stroke="#aaaaaa" stroke-width="2"/>
<line x1="1000" y1="527.3" x2="1008" y2="527.3" stroke="#aaaaaa" stroke-width="2"/>
<line x1="1000" y1="579.7" x2="1008" y2="579.7" stroke="#aaaaaa" stroke-width="2"/>
<line x1="1000" y1="625.9" x2="1008" y2="625.9" stroke="#aaaaaa" stroke-width="2"/>
<line x1="1000" y1="667.2" x2="1008" y2="667.2" stroke="#aaaaaa" stroke-width="2"/>
<line x1="1000" y1="704.5" x2="1008" y2="704.5" stroke="#aaaaaa" stroke-width="2"/>
<line x1="1000" y1="738.7" x2="1008" y2="738.7" stroke="#aaaaaa" stroke-width="2"/>
<line x1="1000" y1="770.1" x2="1008" y2="770.1" stroke="#aaaaaa" stroke-width="2"/>
<line x1="1000" y1="799.1" x2="1008" y2="799.1" stroke="#aaaaaa" stroke-width="2"/>
<line x1="1000" y1="826.2" x2="1008" y2="826.2" stroke="#aaaaaa" stroke-width="2"/>
<line x1="1000" y1="851.5" x2="1008" y2="851.5" stroke="#aaaaaa" stroke-width="2"/>
<line x1="1000" y1="875.3" x2="1008" y2="875.3" stroke="#aaaaaa" stroke-width="2"/>
<line x1="1000" y1="897.7" x2="1008" y2="897.7" stroke="#aaaaaa" stroke-width="2"/>
<line x1="1000" y1="918.9" x2="1008" y2="918.9" stroke="#aaaaaa" stroke-width="2"/>
<line x1="1000" y1="939" x2="1008" y2="939" stroke="#aaaaaa" stroke-width="2"/>
<text x="1012" y="63" font-size="18" fill="#fff" letter-spacing="0.3">Wind Speed</text>
<text x="1012" y="88" font-size="18" fill="#fff" letter-spacing="0.3">(knots)</text>
<text x="1025" y="985" font-size="20" fill="#fff" textLength="20" lengthAdjust="spacingAndGlyphs">40</text>
<text x="1056" y="985" font-size="20" fill="#fff" textLength="24.5" lengthAdjust="spacingAndGlyphs">80</text>
<text x="1081.5" y="985" font-size="20" fill="#fff" textLength="29.5" lengthAdjust="spacingAndGlyphs">120</text>
<line x1="1009" y1="41.3" x2="1023.2" y2="41.3" stroke="#00ffff" stroke-width="3"/>
<line x1="1009" y1="82.3" x2="1023.2" y2="82.3" stroke="#00ffff" stroke-width="3"/>
<line x1="1009" y1="100.6" x2="1026.6" y2="100.6" stroke="#00ffff" stroke-width="3"/>
<line x1="1009" y1="119.6" x2="1031.6" y2="119.6" stroke="#00ffff" stroke-width="3"/>
<line x1="1009" y1="139.9" x2="1031.6" y2="139.9" stroke="#00ffff" stroke-width="3"/>
<line x1="1009" y1="153.6" x2="1038.3" y2="153.6" stroke="#00ffff" stroke-width="3"/>
<line x1="1009" y1="158.6" x2="1040.2" y2="158.6" stroke="#00ffff" stroke-width="3"/>
<line x1="1009" y1="196.3" x2="1043.5" y2="196.3" stroke="#00ffff" stroke-width="3"/>
<line x1="1009" y1="201" x2="1041.7" y2="201" stroke="#00ffff" stroke-width="3"/>
<line x1="1009" y1="216.8" x2="1038.3" y2="216.8" stroke="#00ffff" stroke-width="3"/>
<line x1="1009" y1="235.3" x2="1033.4" y2="235.3" stroke="#00ffff" stroke-width="3"/>
<line x1="1009" y1="293.3" x2="1023.2" y2="293.3" stroke="#00ffff" stroke-width="3"/>
<line x1="1009" y1="309" x2="1024.8" y2="309" stroke="#00ffff" stroke-width="3"/>
<line x1="1009" y1="370.8" x2="1031.6" y2="370.8" stroke="#00ffff" stroke-width="3"/>
<line x1="1009" y1="394.5" x2="1035" y2="394.5" stroke="#00ffff" stroke-width="3"/>
<line x1="1009" y1="397.5" x2="1035" y2="397.5" stroke="#00ffff" stroke-width="3"/>
<line x1="1009" y1="404.6" x2="1035" y2="404.6" stroke="#00ffff" stroke-width="3"/>
<line x1="1009" y1="423.8" x2="1031.6" y2="423.8" stroke="#00ffff" stroke-width="3"/>
<line x1="1009" y1="450.8" x2="1028.2" y2="450.8" stroke="#00ffff" stroke-width="3"/>
<line x1="1009" y1="461" x2="1026.6" y2="461" stroke="#00ffff" stroke-width="3"/>
<line x1="1009" y1="467.8" x2="1024.8" y2="467.8" stroke="#00ffff" stroke-width="3"/>
<line x1="1009" y1="493.7" x2="1024.8" y2="493.7" stroke="#ffff00" stroke-width="3"/>
<line x1="1009" y1="525.7" x2="1023.2" y2="525.7" stroke="#ffff00" stroke-width="3"/>
<line x1="1009" y1="532.5" x2="1023.2" y2="532.5" stroke="#ffff00" stroke-width="3"/>
<line x1="1009" y1="575.4" x2="1031.6" y2="575.4" stroke="#ffff00" stroke-width="3"/>
<line x1="1009" y1="580.1" x2="1031.6" y2="580.1" stroke="#ffff00" stroke-width="3"/>
<line x1="1009" y1="625" x2="1031.8" y2="625" stroke="#ffff00" stroke-width="3"/>
<line x1="1009" y1="655.8" x2="1031.8" y2="655.8" stroke="#00ff00" stroke-width="3"/>
<line x1="1009" y1="667.7" x2="1033.6" y2="667.7" stroke="#00ff00" stroke-width="3"/>
<line x1="1009" y1="686.4" x2="1033.6" y2="686.4" stroke="#00ff00" stroke-width="3"/>
<line x1="1009" y1="715.5" x2="1035.5" y2="715.5" stroke="#00ff00" stroke-width="3"/>
<line x1="1009" y1="736.1" x2="1033.6" y2="736.1" stroke="#00ff00" stroke-width="3"/>
<line x1="1009" y1="746.3" x2="1031.8" y2="746.3" stroke="#00ff00" stroke-width="3"/>
<line x1="1009" y1="775.4" x2="1028.4" y2="775.4" stroke="#00ff00" stroke-width="3"/>
<line x1="1009" y1="800" x2="1023.3" y2="800" stroke="#ff0000" stroke-width="3"/>
<line x1="1009" y1="802.5" x2="1023.3" y2="802.5" stroke="#ff0000" stroke-width="3"/>
<line x1="1009" y1="805" x2="1023.3" y2="805" stroke="#ff0000" stroke-width="3"/>
<line x1="1009" y1="818.2" x2="1023.3" y2="818.2" stroke="#ff0000" stroke-width="3"/>
<line x1="1009" y1="833.5" x2="1023" y2="833.5" stroke="#ff0000" stroke-width="3"/>
<line x1="1009" y1="837" x2="1024.4" y2="837" stroke="#ff0000" stroke-width="3"/>
<line x1="1009" y1="847" x2="1026.4" y2="847" stroke="#ff0000" stroke-width="3"/>
<line x1="1009" y1="858.5" x2="1033.6" y2="858.5" stroke="#ff0000" stroke-width="3"/>
<line x1="1009" y1="861.5" x2="1033.6" y2="861.5" stroke="#ff0000" stroke-width="3"/>
<line x1="1009" y1="869.4" x2="1035.5" y2="869.4" stroke="#ff0000" stroke-width="3"/>
<line x1="1009" y1="874" x2="1035.5" y2="874" stroke="#ff0000" stroke-width="3"/>
<line x1="1009" y1="876.5" x2="1033.5" y2="876.5" stroke="#ff0000" stroke-width="3"/>
<line x1="1009" y1="884.8" x2="1031.8" y2="884.8" stroke="#ff0000" stroke-width="3"/>
<line x1="1009" y1="888.5" x2="1031.8" y2="888.5" stroke="#ff0000" stroke-width="3"/>
<line x1="1009" y1="895.1" x2="1030" y2="895.1" stroke="#ff0000" stroke-width="3"/>
<line x1="1009" y1="901.9" x2="1028.4" y2="901.9" stroke="#ff0000" stroke-width="3"/>
<line x1="1009" y1="908.7" x2="1026.8" y2="908.7" stroke="#ff0000" stroke-width="3"/>
<line x1="1009" y1="915.4" x2="1025" y2="915.4" stroke="#ff0000" stroke-width="3"/>
<line x1="1009" y1="920.9" x2="1020" y2="920.9" stroke="#ff0000" stroke-width="3"/>
<line x1="1009" y1="927.4" x2="1014.6" y2="927.4" stroke="#ff0000" stroke-width="3"/>
<line x1="1181.5" y1="40" x2="1181.5" y2="958" stroke="#fff" stroke-width="3"/>
<line x1="1112" y1="40" x2="1182" y2="40" stroke="#fff" stroke-width="3"/>
<line x1="1146.3" y1="40" x2="1146.3" y2="958" stroke="#999999" stroke-width="3" stroke-dasharray="5,4"/>
<text x="1116" y="63" font-size="18" fill="#fff" letter-spacing="0.3">Inf.</text>
<text x="1116" y="89" font-size="18" fill="#fff" letter-spacing="0.3">Temp.</text>
<clipPath id="advc"><rect x="1113" y="90" width="67" height="20.5"/></clipPath>
<g clip-path="url(#advc)">
<text x="1116" y="112" font-size="18" fill="#fff" letter-spacing="0.3">Adv</text>
</g>
<rect x="1143" y="244" width="5" height="173" fill="#4a8cc0"/>
<rect x="1143" y="550" width="6" height="94" fill="none" stroke="#3aa8e8" stroke-width="1.5"/>
<rect x="1145" y="644" width="5" height="194" fill="#ff0000"/>
<rect x="1146" y="719.5" width="12" height="64" fill="none" stroke="#ff0000" stroke-width="1.5"/>
<rect x="1141" y="838" width="7" height="48" fill="none" stroke="#3aa8e8" stroke-width="1.5"/>
<rect x="1146" y="886" width="20" height="42" fill="none" stroke="#ff0000" stroke-width="1.5"/>
<text x="1143" y="348" font-size="17" fill="#3a8ad0" text-anchor="end">-1.2</text>
<text x="1143" y="503" font-size="17" fill="#3a8ad0" text-anchor="end">-0.2</text>
<text x="1143" y="610" font-size="17" fill="#3a8ad0" text-anchor="end">-1.4</text>
<text x="1143" y="874" font-size="17" fill="#3a8ad0" text-anchor="end">-1.7</text>
<text x="1151" y="695" font-size="17" fill="#ff0000">0.3</text>
<text x="1151" y="765" font-size="17" fill="#ff0000">3.5</text>
<text x="1151" y="823" font-size="17" fill="#ff0000">0.5</text>
<text x="1151" y="919" font-size="17" fill="#ff0000">7.2</text>
<rect x="1183" y="40" width="829.5" height="693.5" fill="none" stroke="#fff" stroke-width="3"/>
<g clip-path="url(#hodc)">
<circle cx="1597.4" cy="385.5" r="51.8" fill="none" stroke="#8c8c8c" stroke-width="1.3" stroke-dasharray="6,4"/>
<circle cx="1597.4" cy="385.5" r="103.6" fill="none" stroke="#8c8c8c" stroke-width="1.3" stroke-dasharray="6,4"/>
<circle cx="1597.4" cy="385.5" r="155.4" fill="none" stroke="#8c8c8c" stroke-width="1.3" stroke-dasharray="6,4"/>
<circle cx="1597.4" cy="385.5" r="207.2" fill="none" stroke="#8c8c8c" stroke-width="1.3" stroke-dasharray="6,4"/>
<circle cx="1597.4" cy="385.5" r="259" fill="none" stroke="#8c8c8c" stroke-width="1.3" stroke-dasharray="6,4"/>
<circle cx="1597.4" cy="385.5" r="310.8" fill="none" stroke="#8c8c8c" stroke-width="1.3" stroke-dasharray="6,4"/>
<circle cx="1597.4" cy="385.5" r="362.6" fill="none" stroke="#8c8c8c" stroke-width="1.3" stroke-dasharray="6,4"/>
<circle cx="1597.4" cy="385.5" r="414.4" fill="none" stroke="#8c8c8c" stroke-width="1.3" stroke-dasharray="6,4"/>
<circle cx="1597.4" cy="385.5" r="466.2" fill="none" stroke="#8c8c8c" stroke-width="1.3" stroke-dasharray="6,4"/>
<circle cx="1597.4" cy="385.5" r="518" fill="none" stroke="#8c8c8c" stroke-width="1.3" stroke-dasharray="6,4"/>
<circle cx="1597.4" cy="385.5" r="569.8" fill="none" stroke="#8c8c8c" stroke-width="1.3" stroke-dasharray="6,4"/>
<circle cx="1597.4" cy="385.5" r="621.6" fill="none" stroke="#8c8c8c" stroke-width="1.3" stroke-dasharray="6,4"/>
<circle cx="1597.4" cy="385.5" r="673.4" fill="none" stroke="#8c8c8c" stroke-width="1.3" stroke-dasharray="6,4"/>
<circle cx="1597.4" cy="385.5" r="725.2" fill="none" stroke="#8c8c8c" stroke-width="1.3" stroke-dasharray="6,4"/>
<circle cx="1597.4" cy="385.5" r="777" fill="none" stroke="#8c8c8c" stroke-width="1.3" stroke-dasharray="6,4"/>
<circle cx="1597.4" cy="385.5" r="828.8" fill="none" stroke="#8c8c8c" stroke-width="1.3" stroke-dasharray="6,4"/>
</g>
<line x1="1183" y1="385.5" x2="2012" y2="385.5" stroke="#fff" stroke-width="3"/>
<line x1="1597.4" y1="40" x2="1597.4" y2="733" stroke="#fff" stroke-width="3"/>
<g clip-path="url(#hodc)">
<text x="1619" y="345.7" font-size="19" fill="#fff" text-anchor="middle" font-weight="bold">10</text>
<text x="1619" y="449.3" font-size="19" fill="#fff" text-anchor="middle" font-weight="bold">10</text>
<text x="1619" y="293.9" font-size="19" fill="#fff" text-anchor="middle" font-weight="bold">20</text>
<text x="1619" y="501.1" font-size="19" fill="#fff" text-anchor="middle" font-weight="bold">20</text>
<text x="1619" y="242.1" font-size="19" fill="#fff" text-anchor="middle" font-weight="bold">30</text>
<text x="1619" y="552.9" font-size="19" fill="#fff" text-anchor="middle" font-weight="bold">30</text>
<text x="1619" y="190.3" font-size="19" fill="#fff" text-anchor="middle" font-weight="bold">40</text>
<text x="1619" y="604.7" font-size="19" fill="#fff" text-anchor="middle" font-weight="bold">40</text>
<text x="1619" y="138.5" font-size="19" fill="#fff" text-anchor="middle" font-weight="bold">50</text>
<text x="1619" y="656.5" font-size="19" fill="#fff" text-anchor="middle" font-weight="bold">50</text>
<text x="1619" y="86.7" font-size="19" fill="#fff" text-anchor="middle" font-weight="bold">60</text>
<text x="1619" y="708.3" font-size="19" fill="#fff" text-anchor="middle" font-weight="bold">60</text>
<text x="1653.7" y="415.5" font-size="19" fill="#fff" text-anchor="middle" font-weight="bold">10</text>
<text x="1550.1" y="415.5" font-size="19" fill="#fff" text-anchor="middle" font-weight="bold">10</text>
<text x="1705.5" y="415.5" font-size="19" fill="#fff" text-anchor="middle" font-weight="bold">20</text>
<text x="1498.3" y="415.5" font-size="19" fill="#fff" text-anchor="middle" font-weight="bold">20</text>
<text x="1757.3" y="415.5" font-size="19" fill="#fff" text-anchor="middle" font-weight="bold">30</text>
<text x="1446.5" y="415.5" font-size="19" fill="#fff" text-anchor="middle" font-weight="bold">30</text>
<text x="1809.1" y="415.5" font-size="19" fill="#fff" text-anchor="middle" font-weight="bold">40</text>
<text x="1394.7" y="415.5" font-size="19" fill="#fff" text-anchor="middle" font-weight="bold">40</text>
<text x="1860.9" y="415.5" font-size="19" fill="#fff" text-anchor="middle" font-weight="bold">50</text>
<text x="1342.9" y="415.5" font-size="19" fill="#fff" text-anchor="middle" font-weight="bold">50</text>
<text x="1912.7" y="415.5" font-size="19" fill="#fff" text-anchor="middle" font-weight="bold">60</text>
<text x="1291.1" y="415.5" font-size="19" fill="#fff" text-anchor="middle" font-weight="bold">60</text>
<text x="1964.5" y="415.5" font-size="19" fill="#fff" text-anchor="middle" font-weight="bold">70</text>
<text x="1239.3" y="415.5" font-size="19" fill="#fff" text-anchor="middle" font-weight="bold">70</text>
<text x="2016.3" y="415.5" font-size="19" fill="#fff" text-anchor="middle" font-weight="bold">80</text>
<text x="1187.5" y="415.5" font-size="19" fill="#fff" text-anchor="middle" font-weight="bold">80</text>
</g>
<g clip-path="url(#hodc)">
<polyline points="1568.3,352.9 1566.4,312.4 1577.7,282.2 1596.5,262.4 1621,253 1645.6,255.8 1673.8,259.6 1728.5,293.5 1742.6,285 1754.9,294.5 1747.4,297.3 1704,303.9 1683.3,306.7 1664.4,307.7 1657.8,301" fill="none" stroke="#ff0000" stroke-width="3" stroke-linejoin="round"/>
<polyline points="1683.3,306.7 1711.5,305.8 1734.2,318 1754.9,329.3 1766.2,342.5 1785,370.8 1770,401.9 1768.1,387.8 1763.4,382.1" fill="none" stroke="#00ff00" stroke-width="3" stroke-linejoin="round"/>
<polyline points="1763.4,382.1 1760.5,361.4 1754.9,342.5 1745.5,335 1721,335.9 1689,344.4" fill="none" stroke="#ffff00" stroke-width="3" stroke-linejoin="round"/>
<polyline points="1702,338.8 1732.3,318 1760.5,293.5 1737.9,270.9 1683.3,250.2 1575.8,282.2" fill="none" stroke="#00e5ff" stroke-width="3" stroke-linejoin="round"/>
</g>
<circle cx="1717.2" cy="245.4" r="8.5" fill="none" stroke="#fff" stroke-width="1.8"/>
<line x1="1712.7" y1="245.4" x2="1721.7" y2="245.4" stroke="#fff" stroke-width="1.8"/>
<line x1="1717.2" y1="240.9" x2="1717.2" y2="249.9" stroke="#fff" stroke-width="1.8"/>
<circle cx="1697.4" cy="395.3" r="8.5" fill="none" stroke="#fff" stroke-width="1.8"/>
<line x1="1692.9" y1="395.3" x2="1701.9" y2="395.3" stroke="#fff" stroke-width="1.8"/>
<line x1="1697.4" y1="390.8" x2="1697.4" y2="399.8" stroke="#fff" stroke-width="1.8"/>
<text x="1723.8" y="272" font-size="19" fill="#fff" font-weight="bold">220/36 LM</text>
<text x="1703" y="423" font-size="19" fill="#fff" font-weight="bold">275/19 RM</text>
<rect x="1707" y="324" width="15" height="15" fill="none" stroke="#d4920a" stroke-width="2.5"/>
<text x="1723.8" y="344" font-size="19" fill="#d4920a" font-weight="bold">240/26</text>
<circle cx="1787.9" cy="385" r="4.5" fill="none" stroke="#1ea6ea" stroke-width="2"/>
<circle cx="1657.8" cy="435.8" r="4.5" fill="none" stroke="#1ea6ea" stroke-width="2"/>
<text x="1793.5" y="407" font-size="19" fill="#1ea6ea" font-weight="bold">DN=270/37</text>
<text x="1664.4" y="456" font-size="19" fill="#1ea6ea" font-weight="bold">UP=310/15</text>
<rect x="1183.5" y="734.5" width="205" height="224" fill="none" stroke="#fff" stroke-width="3"/>
<line x1="1185" y1="847" x2="1387" y2="847" stroke="#0c3c7c" stroke-width="3"/>
<line x1="1284.7" y1="736" x2="1284.7" y2="957" stroke="#0c3c7c" stroke-width="3"/>
<text x="1310" y="762" font-size="22" fill="#fff">79 deg</text>
<circle cx="1285" cy="851" r="7.5" fill="none" stroke="#00ff00" stroke-width="1.4"/>
<circle cx="1285.5" cy="847" r="7.5" fill="none" stroke="#00ff00" stroke-width="1.4"/>
<circle cx="1286.5" cy="843" r="7.5" fill="none" stroke="#00ff00" stroke-width="1.4"/>
<circle cx="1288" cy="839" r="7.5" fill="none" stroke="#00ff00" stroke-width="1.4"/>
<circle cx="1290" cy="835.5" r="7.5" fill="none" stroke="#00ff00" stroke-width="1.4"/>
<circle cx="1292" cy="832.5" r="7.5" fill="none" stroke="#00ff00" stroke-width="1.4"/>
<circle cx="1294.5" cy="830" r="7.5" fill="none" stroke="#00ff00" stroke-width="1.4"/>
<circle cx="1297" cy="828" r="7.5" fill="none" stroke="#00ff00" stroke-width="1.4"/>
<circle cx="1299.5" cy="826.5" r="7.5" fill="none" stroke="#00ff00" stroke-width="1.4"/>
<circle cx="1301.5" cy="828.5" r="7.5" fill="none" stroke="#ffff00" stroke-width="1.4"/>
<circle cx="1303.5" cy="826.5" r="7.5" fill="none" stroke="#ffff00" stroke-width="1.4"/>
<circle cx="1306" cy="824" r="7.5" fill="none" stroke="#ffff00" stroke-width="1.4"/>
<circle cx="1308.5" cy="821.5" r="7.5" fill="none" stroke="#ffff00" stroke-width="1.4"/>
<circle cx="1310.5" cy="819" r="7.5" fill="none" stroke="#ffff00" stroke-width="1.4"/>
<circle cx="1306.5" cy="824" r="7.5" fill="none" stroke="#00ffff" stroke-width="1.4"/>
<circle cx="1309" cy="821" r="7.5" fill="none" stroke="#00ffff" stroke-width="1.4"/>
<circle cx="1311.5" cy="818.5" r="7.5" fill="none" stroke="#00ffff" stroke-width="1.4"/>
<circle cx="1313.5" cy="816" r="7.5" fill="none" stroke="#00ffff" stroke-width="1.4"/>
<circle cx="1306.7" cy="805" r="9" fill="none" stroke="#c000c0" stroke-width="1.8"/>
<line x1="1285" y1="846.5" x2="1337" y2="850.4" stroke="#fff" stroke-width="3"/>
<clipPath id="slc"><rect x="1185" y="736" width="202" height="221"/></clipPath>
<g clip-path="url(#slc)">
<text x="1191" y="958.5" font-size="22" fill="#fff">Storm Slinky</text>
</g>
<rect x="1388.5" y="734.5" width="209" height="224" fill="none" stroke="#fff" stroke-width="3"/>
<text x="1392" y="777.8" font-size="19" fill="#fff">500</text>
<line x1="1588" y1="770.8" x2="1597" y2="770.8" stroke="#aaa" stroke-width="2"/>
<text x="1392" y="813.3" font-size="19" fill="#fff">600</text>
<line x1="1588" y1="806.3" x2="1597" y2="806.3" stroke="#aaa" stroke-width="2"/>
<text x="1392" y="848.7" font-size="19" fill="#fff">700</text>
<line x1="1588" y1="841.7" x2="1597" y2="841.7" stroke="#aaa" stroke-width="2"/>
<text x="1392" y="885.1" font-size="19" fill="#fff">800</text>
<line x1="1588" y1="878.1" x2="1597" y2="878.1" stroke="#aaa" stroke-width="2"/>
<text x="1392" y="920.5" font-size="19" fill="#fff">900</text>
<line x1="1588" y1="913.5" x2="1597" y2="913.5" stroke="#aaa" stroke-width="2"/>
<text x="1392" y="956" font-size="19" fill="#fff">1000</text>
<line x1="1588" y1="949" x2="1597" y2="949" stroke="#aaa" stroke-width="2"/>
<line x1="1443.5" y1="736" x2="1443.5" y2="745" stroke="#aaa" stroke-width="2"/>
<line x1="1443.5" y1="950" x2="1443.5" y2="958" stroke="#aaa" stroke-width="2"/>
<text x="1456.5" y="949" font-size="17" fill="#fff" text-anchor="middle">330</text>
<line x1="1507" y1="736" x2="1507" y2="745" stroke="#aaa" stroke-width="2"/>
<line x1="1507" y1="950" x2="1507" y2="958" stroke="#aaa" stroke-width="2"/>
<text x="1520" y="949" font-size="17" fill="#fff" text-anchor="middle">340</text>
<line x1="1569.6" y1="736" x2="1569.6" y2="745" stroke="#aaa" stroke-width="2"/>
<line x1="1569.6" y1="950" x2="1569.6" y2="958" stroke="#aaa" stroke-width="2"/>
<text x="1582.6" y="949" font-size="17" fill="#fff" text-anchor="middle">350</text>
<text x="1491.5" y="784" font-size="18" fill="#fff" text-anchor="middle" letter-spacing="0.3">Theta-E</text>
<text x="1491.5" y="812" font-size="18" fill="#fff" text-anchor="middle" letter-spacing="0.3">v.</text>
<text x="1491.5" y="836" font-size="18" fill="#fff" text-anchor="middle" letter-spacing="0.3">Pres</text>
<polyline points="1464.4,735.4 1462.3,752 1452.9,769.8 1452.9,841.7 1450.8,845.8 1463.3,867.7 1511.3,882.3 1522.7,889.6 1521.7,896.9 1545.6,903.1 1532.1,911.5 1532.1,922.9 1536.2,930.2 1550.8,939.6" fill="none" stroke="#ff0000" stroke-width="3" stroke-linejoin="round"/>
<rect x="1598.5" y="734.5" width="206" height="224" fill="none" stroke="#fff" stroke-width="3"/>
<text x="1626" y="766.9" font-size="19" fill="#fff" text-anchor="middle">14</text>
<line x1="1601" y1="759.9" x2="1608" y2="759.9" stroke="#aaa" stroke-width="2.5"/>
<line x1="1796" y1="759.9" x2="1803" y2="759.9" stroke="#aaa" stroke-width="2.5"/>
<text x="1626" y="794.3" font-size="19" fill="#fff" text-anchor="middle">12</text>
<line x1="1601" y1="787.3" x2="1608" y2="787.3" stroke="#aaa" stroke-width="2.5"/>
<line x1="1796" y1="787.3" x2="1803" y2="787.3" stroke="#aaa" stroke-width="2.5"/>
<text x="1626" y="821.8" font-size="19" fill="#fff" text-anchor="middle">10</text>
<line x1="1601" y1="814.8" x2="1608" y2="814.8" stroke="#aaa" stroke-width="2.5"/>
<line x1="1796" y1="814.8" x2="1803" y2="814.8" stroke="#aaa" stroke-width="2.5"/>
<text x="1626" y="851.4" font-size="19" fill="#fff" text-anchor="middle">8</text>
<line x1="1601" y1="844.4" x2="1608" y2="844.4" stroke="#aaa" stroke-width="2.5"/>
<line x1="1796" y1="844.4" x2="1803" y2="844.4" stroke="#aaa" stroke-width="2.5"/>
<text x="1626" y="877.8" font-size="19" fill="#fff" text-anchor="middle">6</text>
<line x1="1601" y1="870.8" x2="1608" y2="870.8" stroke="#aaa" stroke-width="2.5"/>
<line x1="1796" y1="870.8" x2="1803" y2="870.8" stroke="#aaa" stroke-width="2.5"/>
<text x="1626" y="907.4" font-size="19" fill="#fff" text-anchor="middle">4</text>
<line x1="1601" y1="900.4" x2="1608" y2="900.4" stroke="#aaa" stroke-width="2.5"/>
<line x1="1796" y1="900.4" x2="1803" y2="900.4" stroke="#aaa" stroke-width="2.5"/>
<text x="1626" y="934.9" font-size="19" fill="#fff" text-anchor="middle">2</text>
<line x1="1601" y1="927.9" x2="1608" y2="927.9" stroke="#aaa" stroke-width="2.5"/>
<line x1="1796" y1="927.9" x2="1803" y2="927.9" stroke="#aaa" stroke-width="2.5"/>
<line x1="1601" y1="773.6" x2="1606" y2="773.6" stroke="#aaa" stroke-width="2"/>
<line x1="1601" y1="801" x2="1606" y2="801" stroke="#aaa" stroke-width="2"/>
<line x1="1601" y1="829.6" x2="1606" y2="829.6" stroke="#aaa" stroke-width="2"/>
<line x1="1601" y1="857.6" x2="1606" y2="857.6" stroke="#aaa" stroke-width="2"/>
<line x1="1601" y1="885.6" x2="1606" y2="885.6" stroke="#aaa" stroke-width="2"/>
<line x1="1601" y1="914" x2="1606" y2="914" stroke="#aaa" stroke-width="2"/>
<line x1="1601" y1="942" x2="1606" y2="942" stroke="#aaa" stroke-width="2"/>
<line x1="1623.8" y1="736" x2="1623.8" y2="744" stroke="#aaa" stroke-width="2.5"/>
<line x1="1623.8" y1="949" x2="1623.8" y2="957" stroke="#aaa" stroke-width="2.5"/>
<line x1="1653.4" y1="736" x2="1653.4" y2="744" stroke="#aaa" stroke-width="2.5"/>
<line x1="1653.4" y1="949" x2="1653.4" y2="957" stroke="#aaa" stroke-width="2.5"/>
<line x1="1680.9" y1="736" x2="1680.9" y2="744" stroke="#aaa" stroke-width="2.5"/>
<line x1="1680.9" y1="949" x2="1680.9" y2="957" stroke="#aaa" stroke-width="2.5"/>
<line x1="1709.4" y1="736" x2="1709.4" y2="744" stroke="#aaa" stroke-width="2.5"/>
<line x1="1709.4" y1="949" x2="1709.4" y2="957" stroke="#aaa" stroke-width="2.5"/>
<line x1="1737.9" y1="736" x2="1737.9" y2="744" stroke="#aaa" stroke-width="2.5"/>
<line x1="1737.9" y1="949" x2="1737.9" y2="957" stroke="#aaa" stroke-width="2.5"/>
<line x1="1766.5" y1="736" x2="1766.5" y2="744" stroke="#aaa" stroke-width="2.5"/>
<line x1="1766.5" y1="949" x2="1766.5" y2="957" stroke="#aaa" stroke-width="2.5"/>
<line x1="1794" y1="736" x2="1794" y2="744" stroke="#aaa" stroke-width="2.5"/>
<line x1="1794" y1="949" x2="1794" y2="957" stroke="#aaa" stroke-width="2.5"/>
<line x1="1638.2" y1="736" x2="1638.2" y2="957" stroke="#aaaaaa" stroke-width="2" stroke-dasharray="4,3"/>
<line x1="1710" y1="736" x2="1710" y2="843" stroke="#8a008a" stroke-width="2" stroke-dasharray="4,3"/>
<line x1="1794" y1="736" x2="1794" y2="843" stroke="#8a008a" stroke-width="2" stroke-dasharray="4,3"/>
<text x="1628" y="755" font-size="17" fill="#fff">SR Wind</text>
<text x="1655" y="781" font-size="17" fill="#fff">v.</text>
<clipPath id="htc"><rect x="1600" y="785" width="200" height="18.5"/></clipPath><g clip-path="url(#htc)">
<text x="1636" y="805" font-size="17" fill="#fff">Height</text>
</g>
<text x="1744.3" y="776" font-size="18" fill="#a800c8" text-anchor="middle" letter-spacing="0.3">Classic</text>
<text x="1744.3" y="801" font-size="18" fill="#a800c8" text-anchor="middle" letter-spacing="0.3">Supercell</text>
<polyline points="1601.6,735.6 1624.9,745.1 1644.9,750.4 1659.7,754.6 1678.8,762 1688.3,763 1680.9,767.3 1692.5,772.5 1684,777.8 1688.3,785.2 1678.8,794.7 1676.6,803.2 1661.9,809.5 1647.1,815.9 1630.2,822.2 1624.9,834.9 1624.9,845.5 1634.4,849.7 1642.8,853.9 1635.4,862.4 1632.3,870.8 1635.4,885.6 1643.9,889.8 1644.9,904.6 1652.3,921.5 1643.9,930 1653.4,936.3 1657.6,944.8 1678.8,948 1686.2,951.1 1680.9,954.3 1670.3,955.3" fill="none" stroke="#ff0000" stroke-width="2.5" stroke-linejoin="round"/>
<line x1="1638.6" y1="869.8" x2="1638.6" y2="901.5" stroke="#6aa8f0" stroke-width="3"/>
<line x1="1646.6" y1="800" x2="1646.6" y2="829.6" stroke="#9a20e0" stroke-width="3"/>
<line x1="1655.5" y1="925.8" x2="1655.5" y2="957" stroke="#a00000" stroke-width="2"/>
<rect x="1806.5" y="734.5" width="206.5" height="224" fill="none" stroke="#fff" stroke-width="3"/>
<line x1="1806.5" y1="791.6" x2="2013" y2="791.6" stroke="#fff" stroke-width="3"/>
<text x="1813" y="776" font-size="29" fill="#fff">Psbl Haz. Type</text>
<text x="1909" y="880.3" font-size="27.2" fill="#f0c020" text-anchor="middle">NONE</text>
<rect x="0" y="997.6" width="2015" height="5.2" fill="#38a2dc"/>
<rect x="1.3" y="997.6" width="5.1" height="331" fill="#38a2dc"/>
<rect x="0" y="1323.7" width="2015" height="3.3" fill="#38a2dc"/>
<rect x="2010.9" y="997.6" width="3.3" height="330" fill="#38a2dc"/>
<rect x="507" y="997.6" width="2.2" height="330" fill="#38a2dc"/>
<rect x="1007.2" y="997.6" width="2.4" height="330" fill="#38a2dc"/>
<rect x="1510.2" y="997.6" width="2.2" height="330" fill="#38a2dc"/>
<line x1="7" y1="1022.2" x2="507" y2="1022.2" stroke="#fff" stroke-width="2"/>
<text x="68.4" y="1021" font-size="18" fill="#fff" text-anchor="middle" letter-spacing="0.3">PCL</text>
<text x="130" y="1021" font-size="18" fill="#fff" text-anchor="middle" letter-spacing="0.3">CAPE</text>
<text x="193.5" y="1021" font-size="18" fill="#fff" text-anchor="middle" letter-spacing="0.3">CINH</text>
<text x="256.6" y="1021" font-size="18" fill="#fff" text-anchor="middle" letter-spacing="0.3">LCL</text>
<text x="319.8" y="1021" font-size="18" fill="#fff" text-anchor="middle" letter-spacing="0.3">LI</text>
<text x="381" y="1021" font-size="18" fill="#fff" text-anchor="middle" letter-spacing="0.3">LFC</text>
<text x="444" y="1021" font-size="18" fill="#fff" text-anchor="middle" letter-spacing="0.3">EL</text>
<text x="68.4" y="1046.8" font-size="18" fill="#fff" text-anchor="middle" letter-spacing="0.3">SFC</text>
<text x="130" y="1046.8" font-size="18" fill="#fff" text-anchor="middle" letter-spacing="0.3">1950</text>
<text x="193.5" y="1046.8" font-size="18" fill="#fff" text-anchor="middle" letter-spacing="0.3">-275</text>
<text x="256.6" y="1046.8" font-size="18" fill="#fff" text-anchor="middle" letter-spacing="0.3">415</text>
<text x="319.8" y="1046.8" font-size="18" fill="#fff" text-anchor="middle" letter-spacing="0.3">-6</text>
<text x="381" y="1046.8" font-size="18" fill="#fff" text-anchor="middle" letter-spacing="0.3">3301</text>
<text x="444" y="1046.8" font-size="18" fill="#fff" text-anchor="middle" letter-spacing="0.3">13054</text>
<text x="68.4" y="1066.1" font-size="18" fill="#fff" text-anchor="middle" letter-spacing="0.3">ML</text>
<text x="130" y="1066.1" font-size="18" fill="#fff" text-anchor="middle" letter-spacing="0.3">1588</text>
<text x="193.5" y="1066.1" font-size="18" fill="#fff" text-anchor="middle" letter-spacing="0.3">-282</text>
<text x="256.6" y="1066.1" font-size="18" fill="#fff" text-anchor="middle" letter-spacing="0.3">1048</text>
<text x="319.8" y="1066.1" font-size="18" fill="#fff" text-anchor="middle" letter-spacing="0.3">-5</text>
<text x="381" y="1066.1" font-size="18" fill="#fff" text-anchor="middle" letter-spacing="0.3">3301</text>
<text x="444" y="1066.1" font-size="18" fill="#fff" text-anchor="middle" letter-spacing="0.3">13054</text>
<text x="68.4" y="1084.2" font-size="18" fill="#fff" text-anchor="middle" letter-spacing="0.3">FCST</text>
<text x="130" y="1084.2" font-size="18" fill="#fff" text-anchor="middle" letter-spacing="0.3">3185</text>
<text x="193.5" y="1084.2" font-size="18" fill="#fff" text-anchor="middle" letter-spacing="0.3">-66</text>
<text x="256.6" y="1084.2" font-size="18" fill="#fff" text-anchor="middle" letter-spacing="0.3">1857</text>
<text x="319.8" y="1084.2" font-size="18" fill="#fff" text-anchor="middle" letter-spacing="0.3">-8</text>
<text x="381" y="1084.2" font-size="18" fill="#fff" text-anchor="middle" letter-spacing="0.3">2691</text>
<text x="444" y="1084.2" font-size="18" fill="#fff" text-anchor="middle" letter-spacing="0.3">13541</text>
<text x="68.4" y="1103" font-size="18" fill="#00c8c8" text-anchor="middle" letter-spacing="0.3">MU</text>
<text x="130" y="1103" font-size="18" fill="#fff" text-anchor="middle" letter-spacing="0.3">1950</text>
<text x="193.5" y="1103" font-size="18" fill="#d83030" text-anchor="middle" letter-spacing="0.3">-275</text>
<text x="256.6" y="1103" font-size="18" fill="#fff" text-anchor="middle" letter-spacing="0.3">415</text>
<text x="319.8" y="1103" font-size="18" fill="#fff" text-anchor="middle" letter-spacing="0.3">-6</text>
<text x="381" y="1103" font-size="18" fill="#fff" text-anchor="middle" letter-spacing="0.3">3301</text>
<text x="444" y="1103" font-size="18" fill="#fff" text-anchor="middle" letter-spacing="0.3">13054</text>
<rect x="10.5" y="1085.5" width="496.5" height="20.5" fill="none" stroke="#8b4a14" stroke-width="1.5"/>
<line x1="7" y1="1109.4" x2="507" y2="1109.4" stroke="#fff" stroke-width="2.5"/>
<text x="16" y="1134.5" font-size="18" fill="#fff" letter-spacing="0.3">PW = 1.47in</text>
<text x="182" y="1134.5" font-size="18" fill="#fff" letter-spacing="0.3">K = 30</text>
<text x="308" y="1134.5" font-size="18" fill="#fff" letter-spacing="0.3">WNDG = 0.0</text>
<text x="16" y="1153.1" font-size="18" fill="#fff" letter-spacing="0.3">MeanW = 13.7g/kg</text>
<text x="182" y="1153.1" font-size="18" fill="#fff" letter-spacing="0.3">TT = 52</text>
<text x="308" y="1153.1" font-size="18" fill="#fff" letter-spacing="0.3">TEI = 16</text>
<text x="16" y="1171.9" font-size="18" fill="#fff" letter-spacing="0.3">LowRH = 76%</text>
<text x="182" y="1171.9" font-size="18" fill="#fff" letter-spacing="0.3">ConvT = 98F</text>
<text x="308" y="1171.9" font-size="18" fill="#fff" letter-spacing="0.3">3CAPE = 0</text>
<text x="16" y="1190.5" font-size="18" fill="#fff" letter-spacing="0.3">MidRH = 43%</text>
<text x="182" y="1190.5" font-size="18" fill="#fff" letter-spacing="0.3">maxT = 91F</text>
<text x="308" y="1190.5" font-size="18" fill="#fff" letter-spacing="0.3">MBURST = 0</text>
<text x="16" y="1209.3" font-size="18" fill="#fff" letter-spacing="0.3">DCAPE = 865</text>
<text x="182" y="1209.3" font-size="18" fill="#fff" letter-spacing="0.3">ESP = 0</text>
<text x="16" y="1227.9" font-size="18" fill="#fff" letter-spacing="0.3">DownT = 63F</text>
<text x="182" y="1227.9" font-size="18" fill="#fff" letter-spacing="0.3">MMP = 0.92</text>
<text x="308" y="1227.9" font-size="18" fill="#fff" letter-spacing="0.3">SigSvr = 30849 m3/s3</text>
<line x1="7" y1="1231.2" x2="507" y2="1231.2" stroke="#fff" stroke-width="2.5"/>
<line x1="349.5" y1="1231.2" x2="349.5" y2="1324" stroke="#fff" stroke-width="2"/>
<text x="16" y="1255.7" font-size="18" fill="#fff" letter-spacing="0.3">Sfc-3km AGL LR = 5.4 C/km</text>
<text x="16" y="1274.5" font-size="18" fill="#fff" letter-spacing="0.3">3-6km AGL LR = 7.6 C/km</text>
<text x="16" y="1293.1" font-size="18" fill="#fff" letter-spacing="0.3">850-500mb LR = 7.2 C/km</text>
<text x="16" y="1311.7" font-size="18" fill="#fff" letter-spacing="0.3">700-500mb LR = 7.8 C/km</text>
<text x="357" y="1255.7" font-size="18" fill="#8b6508" font-weight="bold" letter-spacing="0.3">Supercell = 0.0</text>
<text x="357" y="1274.5" font-size="18" fill="#8b6508" font-weight="bold" letter-spacing="0.3">STP (cin) = 0.0</text>
<text x="357" y="1293.1" font-size="18" fill="#ffff00" font-weight="bold" letter-spacing="0.3">STP (fix) = 2.7</text>
<text x="357" y="1311.7" font-size="18" fill="#fff" font-weight="bold" letter-spacing="0.3">SHIP = 0.9</text>
<line x1="509" y1="1027.4" x2="1007" y2="1027.4" stroke="#fff" stroke-width="2.5"/>
<text x="657.9" y="1025" font-size="18" fill="#fff" text-anchor="middle" letter-spacing="0.3">SRH (m2/s2)</text>
<text x="782.4" y="1025" font-size="18" fill="#fff" text-anchor="middle" letter-spacing="0.3">Shear (kt)</text>
<text x="883.8" y="1025" font-size="18" fill="#fff" text-anchor="middle" letter-spacing="0.3">MnWind</text>
<text x="974.6" y="1025" font-size="18" fill="#fff" text-anchor="middle" letter-spacing="0.3">SRW</text>
<text x="518" y="1050.5" font-size="18" fill="#fff" letter-spacing="0.3">SFC-1km</text>
<text x="706" y="1050.5" font-size="18" fill="#fff" text-anchor="end" letter-spacing="0.3">322</text>
<text x="807" y="1050.5" font-size="18" fill="#fff" text-anchor="end" letter-spacing="0.3">35</text>
<text x="908" y="1050.5" font-size="18" fill="#fff" text-anchor="end" letter-spacing="0.3">197/21</text>
<text x="1007" y="1050.5" font-size="18" fill="#fff" text-anchor="end" letter-spacing="0.3">149/25</text>
<text x="518" y="1069.5" font-size="18" fill="#fff" letter-spacing="0.3">SFC-3km</text>
<text x="706" y="1069.5" font-size="18" fill="#fff" text-anchor="end" letter-spacing="0.3">283</text>
<text x="807" y="1069.5" font-size="18" fill="#fff" text-anchor="end" letter-spacing="0.3">24</text>
<text x="908" y="1069.5" font-size="18" fill="#fff" text-anchor="end" letter-spacing="0.3">218/23</text>
<text x="1007" y="1069.5" font-size="18" fill="#fff" text-anchor="end" letter-spacing="0.3">165/20</text>
<text x="518" y="1088.1" font-size="18" fill="#fff" letter-spacing="0.3">Eff Inflow Layer</text>
<text x="706" y="1088.1" font-size="18" fill="#fff" text-anchor="end" letter-spacing="0.3">--</text>
<text x="807" y="1088.1" font-size="18" fill="#fff" text-anchor="end" letter-spacing="0.3">--</text>
<text x="908" y="1088.1" font-size="18" fill="#fff" text-anchor="end" letter-spacing="0.3">--/--</text>
<text x="1007" y="1088.1" font-size="18" fill="#fff" text-anchor="end" letter-spacing="0.3">--/--</text>
<text x="518" y="1115.7" font-size="18" fill="#fff" letter-spacing="0.3">SFC-6km</text>
<text x="807" y="1115.7" font-size="18" fill="#fff" text-anchor="end" letter-spacing="0.3">38</text>
<text x="908" y="1115.7" font-size="18" fill="#fff" text-anchor="end" letter-spacing="0.3">234/24</text>
<text x="1007" y="1115.7" font-size="18" fill="#fff" text-anchor="end" letter-spacing="0.3">180/16</text>
<text x="518" y="1134.5" font-size="18" fill="#fff" letter-spacing="0.3">SFC-8km</text>
<text x="807" y="1134.5" font-size="18" fill="#fff" text-anchor="end" letter-spacing="0.3">25</text>
<text x="908" y="1134.5" font-size="18" fill="#fff" text-anchor="end" letter-spacing="0.3">237/24</text>
<text x="1007" y="1134.5" font-size="18" fill="#fff" text-anchor="end" letter-spacing="0.3">184/15</text>
<text x="518" y="1153.1" font-size="18" fill="#fff" letter-spacing="0.3">LCL-EL (Cloud Layer)</text>
<text x="807" y="1153.1" font-size="18" fill="#fff" text-anchor="end" letter-spacing="0.3">13</text>
<text x="908" y="1153.1" font-size="18" fill="#fff" text-anchor="end" letter-spacing="0.3">240/26</text>
<text x="1007" y="1153.1" font-size="18" fill="#fff" text-anchor="end" letter-spacing="0.3">193/15</text>
<text x="518" y="1171.9" font-size="18" fill="#fff" letter-spacing="0.3">Eff Shear (EBWD)</text>
<text x="807" y="1171.9" font-size="18" fill="#fff" text-anchor="end" letter-spacing="0.3">--</text>
<text x="908" y="1171.9" font-size="18" fill="#fff" text-anchor="end" letter-spacing="0.3">--/--</text>
<text x="1007" y="1171.9" font-size="18" fill="#fff" text-anchor="end" letter-spacing="0.3">--/--</text>
<text x="518" y="1199" font-size="18" fill="#fff" letter-spacing="0.3">BRN Shear =</text>
<text x="807" y="1199" font-size="18" fill="#fff" text-anchor="end" letter-spacing="0.3">68 m2/s2</text>
<text x="518" y="1217.8" font-size="18" fill="#fff" letter-spacing="0.3">4-6km SR Wind =</text>
<text x="807" y="1217.8" font-size="18" fill="#fff" text-anchor="end" letter-spacing="0.3">249/16 kt</text>
<text x="518" y="1245.5" font-size="18" fill="#fff" letter-spacing="0.3">...Storm Motion Vectors...</text>
<text x="518" y="1264.2" font-size="18" fill="#fff" letter-spacing="0.3">Bunkers Right =</text>
<text x="807" y="1264.2" font-size="18" fill="#1ea0dc" text-anchor="end" letter-spacing="0.3">275/19 kt</text>
<text x="518" y="1282.8" font-size="18" fill="#fff" letter-spacing="0.3">Bunkers Left =</text>
<text x="807" y="1282.8" font-size="18" fill="#e05a5a" text-anchor="end" letter-spacing="0.3">220/36 kt</text>
<text x="518" y="1301.5" font-size="18" fill="#fff" letter-spacing="0.3">Corfidi Downshear =</text>
<text x="807" y="1301.5" font-size="18" fill="#fff" text-anchor="end" letter-spacing="0.3">270/37 kt</text>
<text x="518" y="1320.2" font-size="18" fill="#fff" letter-spacing="0.3">Corfidi Upshear =</text>
<text x="807" y="1320.2" font-size="18" fill="#fff" text-anchor="end" letter-spacing="0.3">310/15 kt</text>
<text x="908.8" y="1293" font-size="18" fill="#1e78d0" text-anchor="middle" letter-spacing="0.3">1km &amp; 6km AGL</text>
<text x="908.8" y="1319" font-size="18" fill="#1e78d0" text-anchor="middle" letter-spacing="0.3">Wind Barbs</text>
<line x1="909.6" y1="1232.8" x2="866.9" y2="1235.7" stroke="#1a6ec0" stroke-width="2"/>
<line x1="866.9" y1="1235.7" x2="865.7" y2="1218.2" stroke="#1a6ec0" stroke-width="2"/>
<line x1="873.4" y1="1235.3" x2="872.2" y2="1217.8" stroke="#1a6ec0" stroke-width="2"/>
<line x1="879.9" y1="1234.8" x2="878.7" y2="1217.4" stroke="#1a6ec0" stroke-width="2"/>
<line x1="908.7" y1="1233.9" x2="875.5" y2="1257.4" stroke="#c00000" stroke-width="2"/>
<line x1="875.5" y1="1257.4" x2="865.4" y2="1243.1" stroke="#c00000" stroke-width="2"/>
<line x1="880.8" y1="1253.6" x2="870.7" y2="1239.4" stroke="#c00000" stroke-width="2"/>
<line x1="886.1" y1="1249.9" x2="876" y2="1235.6" stroke="#c00000" stroke-width="2"/>
<line x1="891.4" y1="1246.1" x2="886.4" y2="1239" stroke="#c00000" stroke-width="2"/>
<clipPath id="sarsc"><rect x="1009.6" y="1002" width="500.6" height="48"/></clipPath>
<g clip-path="url(#sarsc)">
<text x="1260" y="1043" font-size="39.5" fill="#fff" text-anchor="middle">SARS - Sounding Analogue System</text>
</g>
<line x1="1009.6" y1="1049.8" x2="1510.2" y2="1049.8" stroke="#fff" stroke-width="2.5"/>
<line x1="1261.8" y1="1049.8" x2="1261.8" y2="1324" stroke="#fff" stroke-width="2.5"/>
<text x="1135.4" y="1080.8" font-size="28.9" fill="#fff" text-anchor="middle">SUPERCELL</text>
<text x="1386" y="1080.8" font-size="28.9" fill="#fff" text-anchor="middle">SGFNT HAIL</text>
<text x="1135.4" y="1153" font-size="25.4" fill="#fff" text-anchor="middle">No Quality Matches</text>
<text x="1386" y="1153" font-size="25.4" fill="#fff" text-anchor="middle">No Quality Matches</text>
<text x="1762" y="1030.4" font-size="27.3" fill="#fff" text-anchor="middle">Effective Layer STP (with CIN)</text>
<line x1="1512.4" y1="1287.7" x2="2011" y2="1287.7" stroke="#6b5a28" stroke-width="3.5"/>
<line x1="1512.4" y1="1287.7" x2="2011" y2="1287.7" stroke="#7a4a00" stroke-width="3.5" stroke-dasharray="7,11"/>
<text x="1529.4" y="1294.7" font-size="19.5" fill="#fff" text-anchor="middle">0</text>
<line x1="1512.4" y1="1265.5" x2="2011" y2="1265.5" stroke="#1a5aa8" stroke-width="3" stroke-dasharray="8,5"/>
<text x="1529.4" y="1272.5" font-size="19.5" fill="#fff" text-anchor="middle">1</text>
<line x1="1512.4" y1="1243.3" x2="2011" y2="1243.3" stroke="#1a5aa8" stroke-width="3" stroke-dasharray="8,5"/>
<text x="1529.4" y="1250.3" font-size="19.5" fill="#fff" text-anchor="middle">2</text>
<line x1="1512.4" y1="1221.2" x2="2011" y2="1221.2" stroke="#1a5aa8" stroke-width="3" stroke-dasharray="8,5"/>
<text x="1529.4" y="1228.2" font-size="19.5" fill="#fff" text-anchor="middle">3</text>
<line x1="1512.4" y1="1199" x2="2011" y2="1199" stroke="#1a5aa8" stroke-width="3" stroke-dasharray="8,5"/>
<text x="1529.4" y="1206" font-size="19.5" fill="#fff" text-anchor="middle">4</text>
<line x1="1512.4" y1="1176.8" x2="2011" y2="1176.8" stroke="#1a5aa8" stroke-width="3" stroke-dasharray="8,5"/>
<text x="1529.4" y="1183.8" font-size="19.5" fill="#fff" text-anchor="middle">5</text>
<line x1="1512.4" y1="1154.6" x2="2011" y2="1154.6" stroke="#1a5aa8" stroke-width="3" stroke-dasharray="8,5"/>
<text x="1529.4" y="1161.6" font-size="19.5" fill="#fff" text-anchor="middle">6</text>
<line x1="1512.4" y1="1132.4" x2="2011" y2="1132.4" stroke="#1a5aa8" stroke-width="3" stroke-dasharray="8,5"/>
<text x="1529.4" y="1139.4" font-size="19.5" fill="#fff" text-anchor="middle">7</text>
<line x1="1512.4" y1="1110.3" x2="2011" y2="1110.3" stroke="#1a5aa8" stroke-width="3" stroke-dasharray="8,5"/>
<text x="1529.4" y="1117.3" font-size="19.5" fill="#fff" text-anchor="middle">8</text>
<line x1="1512.4" y1="1088.1" x2="2011" y2="1088.1" stroke="#1a5aa8" stroke-width="3" stroke-dasharray="8,5"/>
<text x="1529.4" y="1095.1" font-size="19.5" fill="#fff" text-anchor="middle">9</text>
<line x1="1512.4" y1="1065.9" x2="2011" y2="1065.9" stroke="#1a5aa8" stroke-width="3" stroke-dasharray="8,5"/>
<text x="1529.4" y="1072.9" font-size="19.5" fill="#fff" text-anchor="middle">10</text>
<line x1="1512.4" y1="1043.7" x2="2011" y2="1043.7" stroke="#1a5aa8" stroke-width="3" stroke-dasharray="8,5"/>
<text x="1529.4" y="1050.7" font-size="19.5" fill="#fff" text-anchor="middle">11</text>
<line x1="1582.4" y1="1042.6" x2="1582.4" y2="1102.5" stroke="#00ff00" stroke-width="3"/>
<line x1="1582.4" y1="1230" x2="1582.4" y2="1261.7" stroke="#00ff00" stroke-width="3"/>
<rect x="1563.9" y="1102.5" width="37" height="127.5" fill="none" stroke="#00ff00" stroke-width="3"/>
<line x1="1563.9" y1="1169.7" x2="1600.9" y2="1169.7" stroke="#00ff00" stroke-width="3"/>
<line x1="1654" y1="1099.2" x2="1654" y2="1186.6" stroke="#00ff00" stroke-width="3"/>
<line x1="1654" y1="1265.5" x2="1654" y2="1284.4" stroke="#00ff00" stroke-width="3"/>
<rect x="1635.5" y="1186.6" width="37" height="79" fill="none" stroke="#00ff00" stroke-width="3"/>
<line x1="1635.5" y1="1233.1" x2="1672.5" y2="1233.1" stroke="#00ff00" stroke-width="3"/>
<line x1="1725.7" y1="1161.9" x2="1725.7" y2="1203.6" stroke="#00ff00" stroke-width="3"/>
<line x1="1725.7" y1="1274.6" x2="1725.7" y2="1287.7" stroke="#00ff00" stroke-width="3"/>
<rect x="1707.2" y="1203.6" width="37" height="71" fill="none" stroke="#00ff00" stroke-width="3"/>
<line x1="1707.2" y1="1248.4" x2="1744.2" y2="1248.4" stroke="#00ff00" stroke-width="3"/>
<line x1="1797" y1="1216.7" x2="1797" y2="1229.4" stroke="#00ff00" stroke-width="3"/>
<line x1="1797" y1="1281.3" x2="1797" y2="1287.7" stroke="#00ff00" stroke-width="3"/>
<rect x="1778.5" y="1229.4" width="37" height="51.9" fill="none" stroke="#00ff00" stroke-width="3"/>
<line x1="1778.5" y1="1259.3" x2="1815.5" y2="1259.3" stroke="#00ff00" stroke-width="3"/>
<line x1="1868.6" y1="1216.7" x2="1868.6" y2="1243.3" stroke="#00ff00" stroke-width="3"/>
<line x1="1868.6" y1="1285" x2="1868.6" y2="1287.7" stroke="#00ff00" stroke-width="3"/>
<rect x="1850.1" y="1243.3" width="37" height="41.7" fill="none" stroke="#00ff00" stroke-width="3"/>
<line x1="1850.1" y1="1269.7" x2="1887.1" y2="1269.7" stroke="#00ff00" stroke-width="3"/>
<line x1="1940" y1="1247.1" x2="1940" y2="1270.8" stroke="#00ff00" stroke-width="3"/>
<line x1="1940" y1="1286.6" x2="1940" y2="1287.7" stroke="#00ff00" stroke-width="3"/>
<rect x="1921.5" y="1270.8" width="37" height="15.7" fill="none" stroke="#00ff00" stroke-width="3"/>
<line x1="1921.5" y1="1281.7" x2="1958.5" y2="1281.7" stroke="#00ff00" stroke-width="3"/>
<text x="1582.4" y="1314.5" font-size="19.9" fill="#fff" text-anchor="middle">EF4+</text>
<text x="1654" y="1314.5" font-size="19.9" fill="#fff" text-anchor="middle">EF3</text>
<text x="1725.7" y="1314.5" font-size="19.9" fill="#fff" text-anchor="middle">EF2</text>
<text x="1797" y="1314.5" font-size="19.9" fill="#fff" text-anchor="middle">EF1</text>
<text x="1868.6" y="1314.5" font-size="19.9" fill="#fff" text-anchor="middle">EF0</text>
<text x="1940" y="1314.5" font-size="19.9" fill="#fff" text-anchor="middle">NONTOR</text>
<rect x="1761" y="1043.8" width="243" height="178" fill="#000"/>
<rect x="1762" y="1044.5" width="241.5" height="177" fill="none" stroke="#fff" stroke-width="3"/>
<clipPath id="legc"><rect x="1763" y="1046" width="239" height="176"/></clipPath>
<g clip-path="url(#legc)">
<text x="1767.5" y="1071" font-size="21.6" fill="#fff">Prob EF2+ torn with supercell</text>
<text x="1767.5" y="1092" font-size="21.6" fill="#fff">Sample CLIMO = .15 sigtor</text>
<line x1="1762" y1="1089.3" x2="2003" y2="1089.3" stroke="#fff" stroke-width="3"/>
<text x="1767.5" y="1115.2" font-size="22" fill="#fff">based on CAPE:</text>
<text x="1945" y="1115.2" font-size="22" fill="#fff">0.13</text>
<text x="1767.5" y="1135.7" font-size="22" fill="#fff">based on LCL:</text>
<text x="1945" y="1135.7" font-size="22" fill="#fff">0.15</text>
<text x="1767.5" y="1156.7" font-size="22" fill="#7f5a08">based on ESRH:</text>
<text x="1945" y="1156.7" font-size="22" fill="#7f5a08">--</text>
<text x="1767.5" y="1177.2" font-size="22" fill="#7f5a08">based on EBWD:</text>
<text x="1945" y="1177.2" font-size="22" fill="#7f5a08">--</text>
<text x="1767.5" y="1197.6" font-size="22" fill="#7f5a08">based on STPC:</text>
<text x="1945" y="1197.6" font-size="22" fill="#7f5a08">0.06</text>
<text x="1767.5" y="1218.1" font-size="22" fill="#ffff00">based on STP_fixed:</text>
<text x="1945" y="1218.1" font-size="22" fill="#ffff00">0.25</text>
</g>
</svg></body></html>
